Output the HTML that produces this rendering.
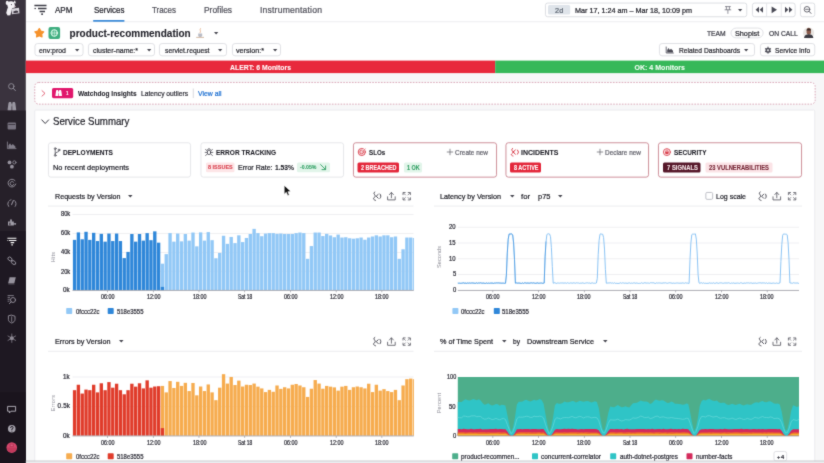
<!DOCTYPE html>
<html>
<head>
<meta charset="utf-8">
<title>product-recommendation | APM</title>
<style>
*{box-sizing:border-box;margin:0;padding:0}
html,body{width:824px;height:463px;overflow:hidden;background:#f7f7f8;font-family:"Liberation Sans",sans-serif}
#root{position:relative;width:824px;height:463px;overflow:hidden;background:#f7f7f8;will-change:transform;filter:url(#soft)}
.a{position:absolute}
.t{position:absolute;white-space:nowrap;display:block;transform-origin:0 50%;-webkit-text-stroke:0.22px currentColor}
.t.b{-webkit-text-stroke:0.08px currentColor}
.r{position:absolute;white-space:nowrap;font-size:5.6px;line-height:7px;color:#8a8a94;transform:translate(-50%,-50%) rotate(-90deg);transform-origin:50% 50%}
.box{position:absolute;background:#fff;border:1px solid #dcdde1;border-radius:2px}
.card{position:absolute;background:#fff;border:1px solid #e4e5e8;border-radius:2.5px;top:142px;height:36px}
.card.red{border-color:#cf7c86}
.bdg{position:absolute;border-radius:1.5px}
svg{position:absolute;overflow:visible}
</style>
</head>
<body>
<svg width="0" height="0" style="position:absolute"><defs><filter id="soft" x="0" y="0" width="100%" height="100%" color-interpolation-filters="sRGB"><feConvolveMatrix order="3" kernelMatrix="0.02 0.085 0.02 0.085 0.58 0.085 0.02 0.085 0.02" divisor="1" edgeMode="duplicate" preserveAlpha="true"/></filter></defs></svg>
<div id="root">
<svg class="a" style="left:0;top:0" width="824" height="463" viewBox="0 0 824 463"><rect x="25.70" y="0.00" width="798.30" height="60.60" rx="0" fill="#ffffff" /><rect x="25.70" y="21.30" width="798.30" height="0.90" rx="0" fill="#ebecee" /><rect x="0.00" y="0.00" width="25.80" height="463.00" rx="0" fill="#3a333e" /><rect x="0.00" y="110.50" width="25.80" height="352.50" rx="0" fill="#262029" /><rect x="0.00" y="231.00" width="25.80" height="232.00" rx="0" fill="#1e1822" /><rect x="0.00" y="392.00" width="25.80" height="71.00" rx="0" fill="#1a141d" /><rect x="93.00" y="20.00" width="31.60" height="1.70" rx="0.8" fill="#3b8ad8" /><rect x="25.80" y="60.60" width="469.40" height="12.50" rx="0" fill="#e8293c" /><rect x="495.20" y="60.60" width="328.80" height="12.50" rx="0" fill="#36b859" /><rect x="34.75" y="82.45" width="780.40" height="21.70" rx="4" fill="#ffffff" stroke="#d79fb1" stroke-width="0.9" stroke-dasharray="1.6 1.3"/><rect x="52.00" y="88.00" width="21.20" height="10.20" rx="1.6" fill="#e1176c" /><rect x="192.80" y="88.50" width="0.80" height="9.50" rx="0" fill="#cfd0d5" /><rect x="34.75" y="110.05" width="780.00" height="359.50" rx="1" fill="#ffffff" stroke="#e9e9ec" stroke-width="0.9" /><rect x="545.45" y="3.05" width="201.30" height="13.70" rx="2.2" fill="#ffffff" stroke="#d9dbe0" stroke-width="0.9" /><rect x="548.00" y="5.00" width="22.20" height="9.60" rx="1.5" fill="#dfe4ea" /><rect x="752.45" y="3.05" width="42.70" height="13.70" rx="2.2" fill="#ffffff" stroke="#d9dbe0" stroke-width="0.9" /><rect x="766.30" y="3.20" width="0.80" height="13.40" rx="0" fill="#dfe0e4" /><rect x="780.80" y="3.20" width="0.80" height="13.40" rx="0" fill="#dfe0e4" /><rect x="800.45" y="3.05" width="14.30" height="13.70" rx="2.2" fill="#ffffff" stroke="#d9dbe0" stroke-width="0.9" /><rect x="34.95" y="43.55" width="48.10" height="12.30" rx="2.6" fill="#ffffff" stroke="#dddee2" stroke-width="0.9" /><rect x="88.45" y="43.55" width="66.10" height="12.30" rx="2.6" fill="#ffffff" stroke="#dddee2" stroke-width="0.9" /><rect x="159.45" y="43.55" width="67.10" height="12.30" rx="2.6" fill="#ffffff" stroke="#dddee2" stroke-width="0.9" /><rect x="232.45" y="43.55" width="48.10" height="12.30" rx="2.6" fill="#ffffff" stroke="#dddee2" stroke-width="0.9" /><rect x="659.45" y="43.55" width="95.10" height="12.30" rx="2.6" fill="#ffffff" stroke="#dddee2" stroke-width="0.9" /><rect x="760.45" y="43.55" width="54.30" height="12.30" rx="2.6" fill="#ffffff" stroke="#dddee2" stroke-width="0.9" /><rect x="730.95" y="28.05" width="32.20" height="9.80" rx="5.3" fill="#ffffff" stroke="#dddee2" stroke-width="0.9" /><rect x="48.45" y="142.75" width="142.10" height="34.40" rx="2.4" fill="#ffffff" stroke="#e3e4e8" stroke-width="0.9" /><rect x="200.95" y="142.75" width="142.60" height="34.40" rx="2.4" fill="#ffffff" stroke="#e3e4e8" stroke-width="0.9" /><rect x="353.45" y="142.75" width="143.10" height="34.40" rx="2.4" fill="#ffffff" stroke="#c98490" stroke-width="0.9" /><rect x="505.95" y="142.75" width="142.60" height="34.40" rx="2.4" fill="#ffffff" stroke="#c98490" stroke-width="0.9" /><rect x="658.45" y="142.75" width="143.10" height="34.40" rx="2.4" fill="#ffffff" stroke="#c98490" stroke-width="0.9" /><rect x="206.00" y="162.60" width="28.50" height="9.60" rx="1.5" fill="#fde5e7" /><rect x="297.00" y="162.60" width="33.00" height="9.60" rx="1.5" fill="#e2f5ea" /><rect x="357.50" y="162.60" width="41.50" height="10.00" rx="1.5" fill="#e3263a" /><rect x="404.00" y="162.60" width="18.00" height="10.00" rx="1.5" fill="#e2f5ea" /><rect x="510.00" y="162.60" width="31.00" height="10.00" rx="1.5" fill="#e3263a" /><rect x="663.00" y="162.40" width="37.50" height="10.00" rx="1.5" fill="#56182a" /><rect x="705.50" y="162.40" width="67.00" height="10.00" rx="1.5" fill="#fbe3e6" /><rect x="48.00" y="205.60" width="365.50" height="0.90" rx="0" fill="#e9eaed" /><rect x="434.00" y="205.60" width="368.00" height="0.90" rx="0" fill="#e9eaed" /><rect x="48.00" y="350.80" width="365.50" height="0.90" rx="0" fill="#e9eaed" /><rect x="434.00" y="350.80" width="368.00" height="0.90" rx="0" fill="#e9eaed" /><rect x="705.85" y="192.45" width="6.80" height="6.90" rx="1.2" fill="#ffffff" stroke="#b9bac2" stroke-width="0.9" /><rect x="773.95" y="451.45" width="12.70" height="9.50" rx="2" fill="#ffffff" stroke="#dcdde1" stroke-width="0.9" /></svg>
<svg class="a" style="left:75.25px;top:49.20px" width="4.3" height="2.4" viewBox="0 0 4.3 2.4"><path d="M0 0H4.3L2.15 2.4Z" fill="#474751"/></svg>
<svg class="a" style="left:146.65px;top:49.20px" width="4.3" height="2.4" viewBox="0 0 4.3 2.4"><path d="M0 0H4.3L2.15 2.4Z" fill="#474751"/></svg>
<svg class="a" style="left:218.15px;top:49.20px" width="4.3" height="2.4" viewBox="0 0 4.3 2.4"><path d="M0 0H4.3L2.15 2.4Z" fill="#474751"/></svg>
<svg class="a" style="left:272.65px;top:49.20px" width="4.3" height="2.4" viewBox="0 0 4.3 2.4"><path d="M0 0H4.3L2.15 2.4Z" fill="#474751"/></svg>
<svg class="a" style="left:743.85px;top:49.20px" width="4.3" height="2.4" viewBox="0 0 4.3 2.4"><path d="M0 0H4.3L2.15 2.4Z" fill="#474751"/></svg>
<svg class="a" style="left:213.85px;top:32.30px" width="4.3" height="2.4" viewBox="0 0 4.3 2.4"><path d="M0 0H4.3L2.15 2.4Z" fill="#474751"/></svg>
<svg class="a" style="left:738.15px;top:9.10px" width="4.3" height="2.4" viewBox="0 0 4.3 2.4"><path d="M0 0H4.3L2.15 2.4Z" fill="#474751"/></svg>
<svg class="a" style="left:128.20px;top:195.00px" width="4.6" height="2.6" viewBox="0 0 4.6 2.6"><path d="M0 0H4.6L2.3 2.6Z" fill="#474751"/></svg>
<svg class="a" style="left:509.50px;top:195.00px" width="4.6" height="2.6" viewBox="0 0 4.6 2.6"><path d="M0 0H4.6L2.3 2.6Z" fill="#474751"/></svg>
<svg class="a" style="left:558.20px;top:195.00px" width="4.6" height="2.6" viewBox="0 0 4.6 2.6"><path d="M0 0H4.6L2.3 2.6Z" fill="#474751"/></svg>
<svg class="a" style="left:119.20px;top:340.30px" width="4.6" height="2.6" viewBox="0 0 4.6 2.6"><path d="M0 0H4.6L2.3 2.6Z" fill="#474751"/></svg>
<svg class="a" style="left:501.50px;top:340.30px" width="4.6" height="2.6" viewBox="0 0 4.6 2.6"><path d="M0 0H4.6L2.3 2.6Z" fill="#474751"/></svg>
<svg class="a" style="left:603.00px;top:340.30px" width="4.6" height="2.6" viewBox="0 0 4.6 2.6"><path d="M0 0H4.6L2.3 2.6Z" fill="#474751"/></svg>
<svg class="a" style="left:0;top:0" width="824" height="463" viewBox="0 0 824 463"><rect x="72.5" y="214.20" width="341.0" height="0.8" fill="#ececef"/><rect x="72.5" y="233.10" width="341.0" height="0.8" fill="#ececef"/><rect x="72.5" y="252.00" width="341.0" height="0.8" fill="#ececef"/><rect x="72.5" y="270.80" width="341.0" height="0.8" fill="#ececef"/><rect x="72.90" y="239.88" width="3.35" height="50.22" fill="#2f87d9"/><rect x="76.72" y="232.39" width="3.35" height="57.71" fill="#2f87d9"/><rect x="80.54" y="239.29" width="3.35" height="50.81" fill="#2f87d9"/><rect x="84.36" y="231.80" width="3.35" height="58.30" fill="#2f87d9"/><rect x="88.18" y="239.88" width="3.35" height="50.22" fill="#2f87d9"/><rect x="92.00" y="232.83" width="3.35" height="57.27" fill="#2f87d9"/><rect x="95.82" y="241.05" width="3.35" height="49.05" fill="#2f87d9"/><rect x="99.64" y="233.86" width="3.35" height="56.24" fill="#2f87d9"/><rect x="103.46" y="241.64" width="3.35" height="48.46" fill="#2f87d9"/><rect x="107.28" y="233.57" width="3.35" height="56.53" fill="#2f87d9"/><rect x="111.10" y="241.05" width="3.35" height="49.05" fill="#2f87d9"/><rect x="114.92" y="233.57" width="3.35" height="56.53" fill="#2f87d9"/><rect x="118.74" y="241.05" width="3.35" height="49.05" fill="#2f87d9"/><rect x="122.56" y="258.09" width="3.35" height="32.01" fill="#2f87d9"/><rect x="126.38" y="251.92" width="3.35" height="38.18" fill="#2f87d9"/><rect x="130.20" y="234.01" width="3.35" height="56.09" fill="#2f87d9"/><rect x="134.02" y="241.64" width="3.35" height="48.46" fill="#2f87d9"/><rect x="137.84" y="234.01" width="3.35" height="56.09" fill="#2f87d9"/><rect x="141.66" y="240.61" width="3.35" height="49.49" fill="#2f87d9"/><rect x="145.48" y="233.12" width="3.35" height="56.98" fill="#2f87d9"/><rect x="149.30" y="240.17" width="3.35" height="49.93" fill="#2f87d9"/><rect x="153.12" y="231.36" width="3.35" height="58.74" fill="#2f87d9"/><rect x="156.94" y="242.67" width="3.35" height="47.43" fill="#2f87d9"/><rect x="160.76" y="263.67" width="3.35" height="26.43" fill="#92c8f6"/><rect x="160.76" y="286.90" width="3.35" height="3.20" fill="#2f87d9"/><rect x="164.58" y="254.12" width="3.35" height="35.98" fill="#92c8f6"/><rect x="168.40" y="233.12" width="3.35" height="56.98" fill="#92c8f6"/><rect x="172.22" y="241.64" width="3.35" height="48.46" fill="#92c8f6"/><rect x="176.04" y="233.57" width="3.35" height="56.53" fill="#92c8f6"/><rect x="179.86" y="241.35" width="3.35" height="48.75" fill="#92c8f6"/><rect x="183.68" y="234.01" width="3.35" height="56.09" fill="#92c8f6"/><rect x="187.50" y="240.61" width="3.35" height="49.49" fill="#92c8f6"/><rect x="191.32" y="232.54" width="3.35" height="57.56" fill="#92c8f6"/><rect x="195.14" y="246.34" width="3.35" height="43.76" fill="#92c8f6"/><rect x="198.96" y="232.39" width="3.35" height="57.71" fill="#92c8f6"/><rect x="202.78" y="240.61" width="3.35" height="49.49" fill="#92c8f6"/><rect x="206.60" y="232.10" width="3.35" height="58.00" fill="#92c8f6"/><rect x="210.42" y="240.17" width="3.35" height="49.93" fill="#92c8f6"/><rect x="214.24" y="258.24" width="3.35" height="31.86" fill="#92c8f6"/><rect x="218.06" y="252.95" width="3.35" height="37.15" fill="#92c8f6"/><rect x="221.88" y="235.77" width="3.35" height="54.33" fill="#92c8f6"/><rect x="225.70" y="243.84" width="3.35" height="46.26" fill="#92c8f6"/><rect x="229.52" y="236.94" width="3.35" height="53.16" fill="#92c8f6"/><rect x="233.34" y="243.11" width="3.35" height="46.99" fill="#92c8f6"/><rect x="237.16" y="235.33" width="3.35" height="54.77" fill="#92c8f6"/><rect x="240.98" y="242.08" width="3.35" height="48.02" fill="#92c8f6"/><rect x="244.80" y="237.97" width="3.35" height="52.13" fill="#92c8f6"/><rect x="248.62" y="234.01" width="3.35" height="56.09" fill="#92c8f6"/><rect x="252.44" y="228.87" width="3.35" height="61.23" fill="#92c8f6"/><rect x="256.26" y="233.12" width="3.35" height="56.98" fill="#92c8f6"/><rect x="260.08" y="236.21" width="3.35" height="53.89" fill="#92c8f6"/><rect x="263.90" y="233.57" width="3.35" height="56.53" fill="#92c8f6"/><rect x="267.72" y="233.12" width="3.35" height="56.98" fill="#92c8f6"/><rect x="271.54" y="233.12" width="3.35" height="56.98" fill="#92c8f6"/><rect x="275.36" y="233.86" width="3.35" height="56.24" fill="#92c8f6"/><rect x="279.18" y="233.57" width="3.35" height="56.53" fill="#92c8f6"/><rect x="283.00" y="234.01" width="3.35" height="56.09" fill="#92c8f6"/><rect x="286.82" y="234.01" width="3.35" height="56.09" fill="#92c8f6"/><rect x="290.64" y="234.01" width="3.35" height="56.09" fill="#92c8f6"/><rect x="294.46" y="233.12" width="3.35" height="56.98" fill="#92c8f6"/><rect x="298.28" y="232.54" width="3.35" height="57.56" fill="#92c8f6"/><rect x="302.10" y="233.12" width="3.35" height="56.98" fill="#92c8f6"/><rect x="305.92" y="258.82" width="3.35" height="31.28" fill="#92c8f6"/><rect x="309.74" y="246.05" width="3.35" height="44.05" fill="#92c8f6"/><rect x="313.56" y="232.54" width="3.35" height="57.56" fill="#92c8f6"/><rect x="317.38" y="232.54" width="3.35" height="57.56" fill="#92c8f6"/><rect x="321.20" y="236.06" width="3.35" height="54.04" fill="#92c8f6"/><rect x="325.02" y="233.86" width="3.35" height="56.24" fill="#92c8f6"/><rect x="328.84" y="235.47" width="3.35" height="54.63" fill="#92c8f6"/><rect x="332.66" y="237.24" width="3.35" height="52.86" fill="#92c8f6"/><rect x="336.48" y="234.59" width="3.35" height="55.51" fill="#92c8f6"/><rect x="340.30" y="237.53" width="3.35" height="52.57" fill="#92c8f6"/><rect x="344.12" y="237.24" width="3.35" height="52.86" fill="#92c8f6"/><rect x="347.94" y="238.26" width="3.35" height="51.84" fill="#92c8f6"/><rect x="351.76" y="238.70" width="3.35" height="51.40" fill="#92c8f6"/><rect x="355.58" y="238.26" width="3.35" height="51.84" fill="#92c8f6"/><rect x="359.40" y="237.53" width="3.35" height="52.57" fill="#92c8f6"/><rect x="363.22" y="239.73" width="3.35" height="50.37" fill="#92c8f6"/><rect x="367.04" y="237.53" width="3.35" height="52.57" fill="#92c8f6"/><rect x="370.86" y="236.50" width="3.35" height="53.60" fill="#92c8f6"/><rect x="374.68" y="235.33" width="3.35" height="54.77" fill="#92c8f6"/><rect x="378.50" y="236.50" width="3.35" height="53.60" fill="#92c8f6"/><rect x="382.32" y="235.33" width="3.35" height="54.77" fill="#92c8f6"/><rect x="386.14" y="235.33" width="3.35" height="54.77" fill="#92c8f6"/><rect x="389.96" y="237.24" width="3.35" height="52.86" fill="#92c8f6"/><rect x="393.78" y="236.50" width="3.35" height="53.60" fill="#92c8f6"/><rect x="397.60" y="258.82" width="3.35" height="31.28" fill="#92c8f6"/><rect x="401.42" y="249.28" width="3.35" height="40.82" fill="#92c8f6"/><rect x="405.24" y="237.53" width="3.35" height="52.57" fill="#92c8f6"/><rect x="409.06" y="237.53" width="3.35" height="52.57" fill="#92c8f6"/><rect x="412.88" y="237.97" width="1.0" height="52.13" fill="#92c8f6"/><rect x="72.5" y="289.95" width="341.3" height="0.8" fill="#9a9aa3"/><rect x="107.20" y="290.30" width="0.7" height="2" fill="#9a9aa3"/><rect x="152.92" y="290.30" width="0.7" height="2" fill="#9a9aa3"/><rect x="198.64" y="290.30" width="0.7" height="2" fill="#9a9aa3"/><rect x="244.36" y="290.30" width="0.7" height="2" fill="#9a9aa3"/><rect x="290.08" y="290.30" width="0.7" height="2" fill="#9a9aa3"/><rect x="335.80" y="290.30" width="0.7" height="2" fill="#9a9aa3"/><rect x="381.52" y="290.30" width="0.7" height="2" fill="#9a9aa3"/><rect x="66.2" y="308.0" width="6" height="6" rx="0.8" fill="#92c8f6"/><rect x="107.7" y="308.0" width="6" height="6" rx="0.8" fill="#2f87d9"/><rect x="72.5" y="376.60" width="341.0" height="0.8" fill="#ececef"/><rect x="72.5" y="406.10" width="341.0" height="0.8" fill="#ececef"/><rect x="72.90" y="390.18" width="3.35" height="45.52" fill="#e03c2b"/><rect x="76.72" y="384.75" width="3.35" height="50.95" fill="#e03c2b"/><rect x="80.54" y="393.56" width="3.35" height="42.14" fill="#e03c2b"/><rect x="84.36" y="389.59" width="3.35" height="46.11" fill="#e03c2b"/><rect x="88.18" y="390.18" width="3.35" height="45.52" fill="#e03c2b"/><rect x="92.00" y="384.75" width="3.35" height="50.95" fill="#e03c2b"/><rect x="95.82" y="392.38" width="3.35" height="43.32" fill="#e03c2b"/><rect x="99.64" y="383.28" width="3.35" height="52.42" fill="#e03c2b"/><rect x="103.46" y="390.18" width="3.35" height="45.52" fill="#e03c2b"/><rect x="107.28" y="382.10" width="3.35" height="53.60" fill="#e03c2b"/><rect x="111.10" y="387.68" width="3.35" height="48.02" fill="#e03c2b"/><rect x="114.92" y="383.72" width="3.35" height="51.98" fill="#e03c2b"/><rect x="118.74" y="390.18" width="3.35" height="45.52" fill="#e03c2b"/><rect x="122.56" y="394.29" width="3.35" height="41.41" fill="#e03c2b"/><rect x="126.38" y="390.18" width="3.35" height="45.52" fill="#e03c2b"/><rect x="130.20" y="383.72" width="3.35" height="51.98" fill="#e03c2b"/><rect x="134.02" y="386.65" width="3.35" height="49.05" fill="#e03c2b"/><rect x="137.84" y="383.28" width="3.35" height="52.42" fill="#e03c2b"/><rect x="141.66" y="388.42" width="3.35" height="47.28" fill="#e03c2b"/><rect x="145.48" y="380.34" width="3.35" height="55.36" fill="#e03c2b"/><rect x="149.30" y="387.68" width="3.35" height="48.02" fill="#e03c2b"/><rect x="153.12" y="386.51" width="3.35" height="49.19" fill="#e03c2b"/><rect x="156.94" y="386.21" width="3.35" height="49.49" fill="#e03c2b"/><rect x="160.76" y="385.92" width="3.35" height="49.78" fill="#f6ac4f"/><rect x="160.76" y="428.10" width="3.35" height="7.60" fill="#e03c2b"/><rect x="164.58" y="392.38" width="3.35" height="43.32" fill="#f6ac4f"/><rect x="168.40" y="381.07" width="3.35" height="54.63" fill="#f6ac4f"/><rect x="172.22" y="387.98" width="3.35" height="47.72" fill="#f6ac4f"/><rect x="176.04" y="381.81" width="3.35" height="53.89" fill="#f6ac4f"/><rect x="179.86" y="385.92" width="3.35" height="49.78" fill="#f6ac4f"/><rect x="183.68" y="382.84" width="3.35" height="52.86" fill="#f6ac4f"/><rect x="187.50" y="391.06" width="3.35" height="44.64" fill="#f6ac4f"/><rect x="191.32" y="382.98" width="3.35" height="52.72" fill="#f6ac4f"/><rect x="195.14" y="395.32" width="3.35" height="40.38" fill="#f6ac4f"/><rect x="198.96" y="386.51" width="3.35" height="49.19" fill="#f6ac4f"/><rect x="202.78" y="391.06" width="3.35" height="44.64" fill="#f6ac4f"/><rect x="206.60" y="384.45" width="3.35" height="51.25" fill="#f6ac4f"/><rect x="210.42" y="392.38" width="3.35" height="43.32" fill="#f6ac4f"/><rect x="214.24" y="400.16" width="3.35" height="35.54" fill="#f6ac4f"/><rect x="218.06" y="387.68" width="3.35" height="48.02" fill="#f6ac4f"/><rect x="221.88" y="374.17" width="3.35" height="61.53" fill="#f6ac4f"/><rect x="225.70" y="383.57" width="3.35" height="52.13" fill="#f6ac4f"/><rect x="229.52" y="376.96" width="3.35" height="58.74" fill="#f6ac4f"/><rect x="233.34" y="385.04" width="3.35" height="50.66" fill="#f6ac4f"/><rect x="237.16" y="380.63" width="3.35" height="55.07" fill="#f6ac4f"/><rect x="240.98" y="386.51" width="3.35" height="49.19" fill="#f6ac4f"/><rect x="244.80" y="384.75" width="3.35" height="50.95" fill="#f6ac4f"/><rect x="248.62" y="385.04" width="3.35" height="50.66" fill="#f6ac4f"/><rect x="252.44" y="383.57" width="3.35" height="52.13" fill="#f6ac4f"/><rect x="256.26" y="386.65" width="3.35" height="49.05" fill="#f6ac4f"/><rect x="260.08" y="388.42" width="3.35" height="47.28" fill="#f6ac4f"/><rect x="263.90" y="392.09" width="3.35" height="43.61" fill="#f6ac4f"/><rect x="267.72" y="389.89" width="3.35" height="45.81" fill="#f6ac4f"/><rect x="271.54" y="391.79" width="3.35" height="43.91" fill="#f6ac4f"/><rect x="275.36" y="385.48" width="3.35" height="50.22" fill="#f6ac4f"/><rect x="279.18" y="388.86" width="3.35" height="46.84" fill="#f6ac4f"/><rect x="283.00" y="387.24" width="3.35" height="48.46" fill="#f6ac4f"/><rect x="286.82" y="388.42" width="3.35" height="47.28" fill="#f6ac4f"/><rect x="290.64" y="384.75" width="3.35" height="50.95" fill="#f6ac4f"/><rect x="294.46" y="384.01" width="3.35" height="51.69" fill="#f6ac4f"/><rect x="298.28" y="385.48" width="3.35" height="50.22" fill="#f6ac4f"/><rect x="302.10" y="387.24" width="3.35" height="48.46" fill="#f6ac4f"/><rect x="305.92" y="396.93" width="3.35" height="38.77" fill="#f6ac4f"/><rect x="309.74" y="388.71" width="3.35" height="46.99" fill="#f6ac4f"/><rect x="313.56" y="380.05" width="3.35" height="55.65" fill="#f6ac4f"/><rect x="317.38" y="383.57" width="3.35" height="52.13" fill="#f6ac4f"/><rect x="321.20" y="388.71" width="3.35" height="46.99" fill="#f6ac4f"/><rect x="325.02" y="385.92" width="3.35" height="49.78" fill="#f6ac4f"/><rect x="328.84" y="386.65" width="3.35" height="49.05" fill="#f6ac4f"/><rect x="332.66" y="387.39" width="3.35" height="48.31" fill="#f6ac4f"/><rect x="336.48" y="390.62" width="3.35" height="45.08" fill="#f6ac4f"/><rect x="340.30" y="386.65" width="3.35" height="49.05" fill="#f6ac4f"/><rect x="344.12" y="385.92" width="3.35" height="49.78" fill="#f6ac4f"/><rect x="347.94" y="389.89" width="3.35" height="45.81" fill="#f6ac4f"/><rect x="351.76" y="387.24" width="3.35" height="48.46" fill="#f6ac4f"/><rect x="355.58" y="386.51" width="3.35" height="49.19" fill="#f6ac4f"/><rect x="359.40" y="387.24" width="3.35" height="48.46" fill="#f6ac4f"/><rect x="363.22" y="388.42" width="3.35" height="47.28" fill="#f6ac4f"/><rect x="367.04" y="383.72" width="3.35" height="51.98" fill="#f6ac4f"/><rect x="370.86" y="392.09" width="3.35" height="43.61" fill="#f6ac4f"/><rect x="374.68" y="384.75" width="3.35" height="50.95" fill="#f6ac4f"/><rect x="378.50" y="390.62" width="3.35" height="45.08" fill="#f6ac4f"/><rect x="382.32" y="389.15" width="3.35" height="46.55" fill="#f6ac4f"/><rect x="386.14" y="391.06" width="3.35" height="44.64" fill="#f6ac4f"/><rect x="389.96" y="392.09" width="3.35" height="43.61" fill="#f6ac4f"/><rect x="393.78" y="389.89" width="3.35" height="45.81" fill="#f6ac4f"/><rect x="397.60" y="400.16" width="3.35" height="35.54" fill="#f6ac4f"/><rect x="401.42" y="385.48" width="3.35" height="50.22" fill="#f6ac4f"/><rect x="405.24" y="379.17" width="3.35" height="56.53" fill="#f6ac4f"/><rect x="409.06" y="378.58" width="3.35" height="57.12" fill="#f6ac4f"/><rect x="412.88" y="379.17" width="1.0" height="56.53" fill="#f6ac4f"/><rect x="72.5" y="435.55" width="341.3" height="0.8" fill="#9a9aa3"/><rect x="107.20" y="435.90" width="0.7" height="2" fill="#9a9aa3"/><rect x="152.92" y="435.90" width="0.7" height="2" fill="#9a9aa3"/><rect x="198.64" y="435.90" width="0.7" height="2" fill="#9a9aa3"/><rect x="244.36" y="435.90" width="0.7" height="2" fill="#9a9aa3"/><rect x="290.08" y="435.90" width="0.7" height="2" fill="#9a9aa3"/><rect x="335.80" y="435.90" width="0.7" height="2" fill="#9a9aa3"/><rect x="381.52" y="435.90" width="0.7" height="2" fill="#9a9aa3"/><rect x="66.2" y="453.2" width="6" height="6" rx="0.8" fill="#f6ac4f"/><rect x="107.7" y="453.2" width="6" height="6" rx="0.8" fill="#e03c2b"/><rect x="457.8" y="226.80" width="341.2" height="0.8" fill="#ececef"/><rect x="457.8" y="242.60" width="341.2" height="0.8" fill="#ececef"/><rect x="457.8" y="258.40" width="341.2" height="0.8" fill="#ececef"/><rect x="457.8" y="274.20" width="341.2" height="0.8" fill="#ececef"/><path d="M457.80 282.92 L458.70 283.13 L459.60 283.01 L460.50 283.17 L461.40 283.19 L462.30 282.80 L463.20 282.76 L464.10 283.34 L465.00 282.93 L465.90 282.91 L466.80 283.45 L467.70 283.08 L468.60 283.34 L469.50 283.08 L470.40 283.20 L471.30 282.86 L472.20 283.19 L473.10 283.36 L474.00 283.12 L474.90 283.27 L475.80 283.22 L476.70 282.79 L477.60 283.28 L478.50 283.16 L479.40 282.96 L480.30 282.77 L481.20 283.36 L482.10 283.08 L483.00 283.25 L483.90 283.37 L484.80 283.25 L485.70 283.39 L486.60 283.03 L487.50 283.31 L488.40 283.06 L489.30 283.40 L490.20 283.37 L491.10 282.82 L492.00 282.85 L492.90 282.90 L493.80 283.43 L494.70 283.06 L495.60 283.19 L496.50 282.96 L497.40 283.11 L498.30 283.02 L499.20 283.00 L500.10 283.16 L501.00 283.16 L501.90 283.38 L502.80 283.23 L503.70 283.40 L504.60 283.35 L505.50 283.44 L506.40 274.87 L507.30 253.13 L508.20 239.37 L509.10 233.91 L510.00 234.04 L510.90 233.78 L511.80 234.24 L512.70 235.01 L513.60 242.79 L514.50 259.33 L515.40 283.36 L516.30 282.78 L517.20 283.18 L518.10 282.78 L519.00 283.25 L519.90 282.98 L520.80 283.37 L521.70 283.44 L522.60 283.10 L523.50 283.45 L524.40 282.97 L525.30 282.80 L526.20 283.17 L527.10 282.77 L528.00 282.89 L528.90 283.04 L529.80 283.18 L530.70 282.86 L531.60 282.78 L532.50 283.36 L533.40 282.97 L534.30 283.42 L535.20 283.38 L536.10 283.01 L537.00 283.07 L537.90 283.11 L538.80 283.20 L539.70 283.17 L540.60 283.14 L541.50 283.18 L542.40 283.41 L543.30 283.10 L544.20 283.05 L545.10 256.86 L546.00 241.90 L546.90 234.51 L547.80 233.96 L548.70 233.76 L549.60 234.07 L550.50 236.69 L551.40 247.59 L552.30 266.55 L553.20 283.27 L554.10 282.77 L555.00 282.79 L555.90 283.22 L556.80 283.42 L557.70 282.93 L558.60 283.07 L559.50 283.16 L560.40 282.97 L561.30 283.00 L562.20 282.97 L563.10 283.01 L564.00 283.17 L564.90 282.96 L565.80 283.01 L566.70 283.29 L567.60 282.77 L568.50 283.15 L569.40 283.26 L570.30 282.97 L571.20 282.91 L572.10 283.31 L573.00 282.92 L573.90 282.88 L574.80 283.05 L575.70 283.24 L576.60 282.82 L577.50 282.98 L578.40 282.98 L579.30 283.33 L580.20 283.06 L581.10 283.35 L582.00 282.87 L582.90 282.99 L583.80 283.21 L584.70 283.37 L585.60 283.07 L586.50 282.91 L587.40 282.83 L588.30 283.12 L589.20 282.88 L590.10 283.31 L591.00 283.34 L591.90 282.88 L592.80 282.95 L593.70 283.32 L594.60 283.20 L595.50 283.31 L596.40 282.99 L597.30 278.36 L598.20 254.79 L599.10 240.40 L600.00 234.17 L600.90 233.83 L601.80 234.22 L602.70 234.24 L603.60 237.65 L604.50 249.06 L605.40 269.29 L606.30 283.21 L607.20 283.11 L608.10 282.95 L609.00 282.99 L609.90 282.91 L610.80 282.80 L611.70 283.16 L612.60 282.95 L613.50 283.32 L614.40 282.78 L615.30 283.38 L616.20 283.24 L617.10 283.40 L618.00 283.38 L618.90 283.38 L619.80 283.15 L620.70 282.76 L621.60 283.27 L622.50 282.87 L623.40 282.96 L624.30 283.21 L625.20 283.12 L626.10 283.04 L627.00 283.41 L627.90 283.18 L628.80 282.99 L629.70 282.93 L630.60 283.35 L631.50 283.08 L632.40 283.30 L633.30 283.00 L634.20 282.89 L635.10 283.12 L636.00 283.32 L636.90 282.87 L637.80 283.30 L638.70 283.40 L639.60 283.31 L640.50 283.33 L641.40 282.76 L642.30 283.19 L643.20 283.35 L644.10 282.78 L645.00 282.94 L645.90 282.94 L646.80 283.12 L647.70 283.05 L648.60 283.08 L649.50 283.29 L650.40 282.75 L651.30 282.79 L652.20 282.84 L653.10 282.84 L654.00 282.80 L654.90 283.43 L655.80 283.35 L656.70 282.81 L657.60 283.10 L658.50 282.97 L659.40 282.97 L660.30 283.00 L661.20 283.20 L662.10 283.16 L663.00 283.00 L663.90 282.88 L664.80 282.98 L665.70 282.84 L666.60 283.14 L667.50 283.25 L668.40 283.02 L669.30 282.81 L670.20 282.87 L671.10 283.01 L672.00 283.17 L672.90 283.30 L673.80 283.02 L674.70 283.31 L675.60 283.19 L676.50 283.05 L677.40 283.01 L678.30 283.10 L679.20 283.24 L680.10 283.04 L681.00 283.24 L681.90 283.07 L682.80 282.92 L683.70 283.13 L684.60 283.24 L685.50 282.80 L686.40 283.05 L687.30 283.05 L688.20 283.37 L689.10 283.41 L690.00 259.39 L690.90 242.85 L691.80 234.67 L692.70 234.08 L693.60 234.15 L694.50 234.12 L695.40 233.86 L696.30 239.09 L697.20 253.04 L698.10 274.83 L699.00 282.82 L699.90 283.37 L700.80 282.88 L701.70 282.77 L702.60 283.34 L703.50 282.83 L704.40 283.34 L705.30 283.22 L706.20 283.34 L707.10 283.42 L708.00 283.16 L708.90 283.31 L709.80 282.78 L710.70 283.29 L711.60 283.11 L712.50 283.25 L713.40 282.82 L714.30 283.27 L715.20 283.40 L716.10 282.79 L717.00 282.98 L717.90 283.14 L718.80 283.33 L719.70 282.92 L720.60 282.88 L721.50 282.92 L722.40 283.18 L723.30 283.28 L724.20 283.03 L725.10 283.01 L726.00 283.03 L726.90 283.00 L727.80 283.04 L728.70 282.81 L729.60 283.10 L730.50 283.43 L731.40 283.04 L732.30 283.27 L733.20 282.86 L734.10 283.23 L735.00 283.28 L735.90 283.22 L736.80 283.11 L737.70 283.09 L738.60 283.20 L739.50 283.38 L740.40 282.85 L741.30 282.82 L742.20 283.27 L743.10 283.39 L744.00 283.11 L744.90 283.06 L745.80 283.25 L746.70 282.88 L747.60 282.94 L748.50 282.89 L749.40 283.16 L750.30 282.97 L751.20 282.91 L752.10 283.23 L753.00 283.42 L753.90 282.96 L754.80 283.24 L755.70 283.04 L756.60 283.35 L757.50 283.16 L758.40 282.94 L759.30 282.90 L760.20 282.77 L761.10 283.09 L762.00 283.02 L762.90 282.87 L763.80 283.00 L764.70 282.98 L765.60 283.29 L766.50 282.85 L767.40 283.44 L768.30 283.09 L769.20 283.17 L770.10 283.08 L771.00 283.33 L771.90 283.33 L772.80 283.14 L773.70 283.09 L774.60 283.25 L775.50 283.35 L776.40 283.03 L777.30 283.26 L778.20 283.42 L779.10 283.08 L780.00 282.91 L780.90 261.60 L781.80 244.61 L782.70 235.21 L783.60 233.88 L784.50 234.10 L785.40 234.20 L786.30 234.18 L787.20 234.82 L788.10 242.76 L789.00 259.36 L789.90 282.95 L790.80 283.00 L791.70 283.16 L792.60 283.22 L793.50 282.75 L794.40 282.98 L795.30 283.06 L796.20 283.09 L797.10 282.90 L798.00 283.16 L798.90 283.42" fill="none" stroke="#86c1f3" stroke-width="0.95" stroke-linejoin="round"/><path d="M457.80 283.19 L458.70 283.27 L459.60 283.31 L460.50 283.41 L461.40 283.27 L462.30 283.40 L463.20 282.77 L464.10 283.08 L465.00 283.41 L465.90 283.20 L466.80 283.38 L467.70 282.83 L468.60 283.08 L469.50 282.92 L470.40 283.13 L471.30 283.15 L472.20 282.76 L473.10 282.90 L474.00 282.95 L474.90 283.39 L475.80 283.29 L476.70 282.86 L477.60 283.31 L478.50 282.85 L479.40 283.18 L480.30 282.84 L481.20 282.75 L482.10 283.36 L483.00 282.90 L483.90 282.90 L484.80 283.44 L485.70 283.36 L486.60 282.95 L487.50 283.42 L488.40 283.13 L489.30 283.22 L490.20 282.89 L491.10 283.41 L492.00 283.23 L492.90 283.43 L493.80 283.38 L494.70 282.96 L495.60 283.00 L496.50 282.87 L497.40 282.85 L498.30 282.80 L499.20 282.96 L500.10 283.17 L501.00 282.75 L501.90 283.22 L502.80 282.99 L503.70 282.97 L504.60 283.32 L505.50 283.09 L506.40 275.03 L507.30 252.68 L508.20 239.10 L509.10 234.23 L510.00 234.14 L510.90 234.04 L511.80 233.77 L512.70 235.09 L513.60 243.10 L514.50 259.41 L515.40 282.99 L516.30 283.00 L517.20 283.12 L518.10 283.29 L519.00 282.83 L519.90 283.27 L520.80 283.31 L521.70 283.35 L522.60 282.78 L523.50 283.41 L524.40 282.81 L525.30 282.99 L526.20 283.18 L527.10 283.39 L528.00 282.99 L528.90 283.40 L529.80 283.13 L530.70 282.97 L531.60 282.97 L532.50 282.87 L533.40 282.80 L534.30 282.85 L535.20 283.23 L536.10 283.45 L537.00 282.86 L537.90 282.78 L538.80 283.44 L539.70 283.12 L540.60 283.03 L541.50 282.92 L542.40 283.17 L543.30 283.33 L544.20 283.07 L545.10 256.77 L546.00 241.42" fill="none" stroke="#3a8fdb" stroke-width="0.8" stroke-linejoin="round" opacity="0.75"/><rect x="457.8" y="289.95" width="341.2" height="0.8" fill="#9a9aa3"/><rect x="492.50" y="290.30" width="0.7" height="2" fill="#9a9aa3"/><rect x="538.22" y="290.30" width="0.7" height="2" fill="#9a9aa3"/><rect x="583.94" y="290.30" width="0.7" height="2" fill="#9a9aa3"/><rect x="629.66" y="290.30" width="0.7" height="2" fill="#9a9aa3"/><rect x="675.38" y="290.30" width="0.7" height="2" fill="#9a9aa3"/><rect x="721.10" y="290.30" width="0.7" height="2" fill="#9a9aa3"/><rect x="766.82" y="290.30" width="0.7" height="2" fill="#9a9aa3"/><rect x="452.4" y="308.0" width="6" height="6" rx="0.8" fill="#92c8f6"/><rect x="493.8" y="308.0" width="6" height="6" rx="0.8" fill="#2f87d9"/><rect x="457.8" y="377.0" width="341.2" height="58.69999999999999" fill="#4dae8b"/><path d="M457.80 435.70 L457.80 402.10 L459.70 401.93 L461.61 401.99 L463.51 400.45 L465.42 399.37 L467.32 400.07 L469.23 400.53 L471.13 400.03 L473.04 399.02 L474.94 399.50 L476.85 400.20 L478.75 399.32 L480.66 400.50 L482.56 402.88 L484.47 404.65 L486.37 404.13 L488.28 403.33 L490.18 404.66 L492.09 405.44 L493.99 404.89 L495.90 403.92 L497.80 404.33 L499.71 405.66 L501.61 404.80 L503.52 404.96 L505.42 405.45 L507.33 414.81 L509.23 424.28 L511.14 431.95 L513.04 427.45 L514.95 417.53 L516.85 404.54 L518.76 401.78 L520.66 401.75 L522.57 401.48 L524.47 400.25 L526.38 399.80 L528.28 400.70 L530.19 401.41 L532.09 400.87 L534.00 399.65 L535.90 400.41 L537.81 399.93 L539.71 398.97 L541.62 400.02 L543.52 403.42 L545.43 414.04 L547.33 424.36 L549.24 432.21 L551.14 426.98 L553.05 417.41 L554.95 405.15 L556.86 402.95 L558.76 403.71 L560.67 403.69 L562.57 402.88 L564.48 401.53 L566.38 402.29 L568.29 402.32 L570.19 401.86 L572.10 401.05 L574.00 401.37 L575.91 402.47 L577.81 401.82 L579.72 400.80 L581.62 401.25 L583.53 401.70 L585.43 401.30 L587.34 400.96 L589.24 401.47 L591.15 402.47 L593.05 401.96 L594.96 401.21 L596.86 401.93 L598.77 407.92 L600.67 419.74 L602.58 429.23 L604.48 430.64 L606.39 422.86 L608.29 412.89 L610.20 406.52 L612.10 407.12 L614.01 407.25 L615.91 406.28 L617.82 404.97 L619.72 406.30 L621.63 407.21 L623.53 407.05 L625.44 406.19 L627.34 407.01 L629.25 407.44 L631.15 405.31 L633.06 403.19 L634.96 403.06 L636.87 402.70 L638.77 401.73 L640.68 400.47 L642.58 401.13 L644.49 401.53 L646.39 401.41 L648.30 402.35 L650.20 404.08 L652.11 403.07 L654.01 400.83 L655.92 399.56 L657.82 400.32 L659.73 400.85 L661.63 400.36 L663.54 400.38 L665.44 401.72 L667.35 403.06 L669.25 402.67 L671.16 401.51 L673.06 402.27 L674.97 403.84 L676.87 403.64 L678.78 403.96 L680.68 404.37 L682.59 404.83 L684.49 404.45 L686.40 403.49 L688.30 403.95 L690.21 412.67 L692.11 423.30 L694.02 431.57 L695.92 427.89 L697.83 418.43 L699.73 406.09 L701.64 400.98 L703.54 399.74 L705.45 400.47 L707.35 399.58 L709.26 398.87 L711.16 399.95 L713.07 400.83 L714.97 401.02 L716.88 400.54 L718.78 402.19 L720.69 402.99 L722.59 402.84 L724.50 402.69 L726.40 404.26 L728.31 404.90 L730.21 404.42 L732.12 403.81 L734.02 404.47 L735.93 404.94 L737.83 404.37 L739.74 403.81 L741.64 404.84 L743.55 405.44 L745.45 404.72 L747.36 404.13 L749.26 404.80 L751.17 404.64 L753.07 403.41 L754.98 402.53 L756.88 402.34 L758.79 402.63 L760.69 401.38 L762.60 400.98 L764.50 401.90 L766.41 402.20 L768.31 401.46 L770.22 401.26 L772.12 402.37 L774.03 403.41 L775.93 403.79 L777.84 403.58 L779.74 404.56 L781.65 411.50 L783.55 421.94 L785.46 430.43 L787.36 429.67 L789.27 421.38 L791.17 410.74 L793.08 405.32 L794.98 406.09 L796.89 407.11 L798.79 406.40 L799.00 405.14 L799.00 435.70Z" fill="#2fc4c6"/><path d="M457.80 417.31 L459.70 417.76 L461.61 417.69 L463.51 416.10 L465.42 416.18 L467.32 416.75 L469.23 416.78 L471.13 415.95 L473.04 415.87 L474.94 415.83 L476.85 416.76 L478.75 416.36 L480.66 416.50 L482.56 418.21 L484.47 419.18 L486.37 419.02 L488.28 417.97 L490.18 418.61 L492.09 419.63 L493.99 419.24 L495.90 418.35 L497.80 419.16 L499.71 419.82 L501.61 418.87 L503.52 418.37 L505.42 419.41 L507.33 424.62 L509.23 429.48 L511.14 433.79 L513.04 431.34 L514.95 426.04 L516.85 418.87 L518.76 417.01 L520.66 417.19 L522.57 417.17 L524.47 416.77 L526.38 416.29 L528.28 416.45 L530.19 417.39 L532.09 417.37 L534.00 416.14 L535.90 416.62 L537.81 416.59 L539.71 416.18 L541.62 416.50 L543.52 417.99 L545.43 424.28 L547.33 429.62 L549.24 433.93 L551.14 431.01 L553.05 426.04 L554.95 419.39 L556.86 417.76 L558.76 418.33 L560.67 418.94 L562.57 417.89 L564.48 417.57 L566.38 417.54 L568.29 417.75 L570.19 417.13 L572.10 416.38 L574.00 417.42 L575.91 417.83 L577.81 416.97 L579.72 416.38 L581.62 416.90 L583.53 418.03 L585.43 417.10 L587.34 416.79 L589.24 416.96 L591.15 417.94 L593.05 417.57 L594.96 417.33 L596.86 417.82 L598.77 420.69 L600.67 427.01 L602.58 432.30 L604.48 433.10 L606.39 428.97 L608.29 423.37 L610.20 419.80 L612.10 419.97 L614.01 420.10 L615.91 419.89 L617.82 419.12 L619.72 420.29 L621.63 420.99 L623.53 420.55 L625.44 419.60 L627.34 419.82 L629.25 420.08 L631.15 419.27 L633.06 417.76 L634.96 418.29 L636.87 417.96 L638.77 417.24 L640.68 416.07 L642.58 416.67 L644.49 417.60 L646.39 417.57 L648.30 417.05 L650.20 418.62 L652.11 418.12 L654.01 417.16 L655.92 416.29 L657.82 416.21 L659.73 417.52 L661.63 417.06 L663.54 416.86 L665.44 417.50 L667.35 417.99 L669.25 417.97 L671.16 417.52 L673.06 417.86 L674.97 418.32 L676.87 418.42 L678.78 418.64 L680.68 418.88 L682.59 419.29 L684.49 419.04 L686.40 418.27 L688.30 418.40 L690.21 423.32 L692.11 429.04 L694.02 433.56 L695.92 431.62 L697.83 426.60 L699.73 419.68 L701.64 416.43 L703.54 416.50 L705.45 417.04 L707.35 415.89 L709.26 415.64 L711.16 416.38 L713.07 417.07 L714.97 416.70 L716.88 416.38 L718.78 417.64 L720.69 418.30 L722.59 417.74 L724.50 417.66 L726.40 418.52 L728.31 419.01 L730.21 418.78 L732.12 418.10 L734.02 418.91 L735.93 419.50 L737.83 418.63 L739.74 418.14 L741.64 418.70 L743.55 419.49 L745.45 419.22 L747.36 418.35 L749.26 419.12 L751.17 419.37 L753.07 418.52 L754.98 417.20 L756.88 417.87 L758.79 418.23 L760.69 417.23 L762.60 416.48 L764.50 417.46 L766.41 417.44 L768.31 417.72 L770.22 416.96 L772.12 417.32 L774.03 418.62 L775.93 418.32 L777.84 418.26 L779.74 419.08 L781.65 422.49 L783.55 428.25 L785.46 432.89 L787.36 432.55 L789.27 428.03 L791.17 421.88 L793.08 419.58 L794.98 420.05 L796.89 420.51 L798.79 419.37 L799.00 418.86" fill="none" stroke="#62d6d7" stroke-width="0.8"/><path d="M457.80 435.70 L457.80 428.88 L459.70 429.12 L461.61 429.37 L463.51 428.85 L465.42 429.11 L467.32 429.15 L469.23 429.13 L471.13 428.83 L473.04 429.25 L474.94 429.19 L476.85 428.88 L478.75 429.05 L480.66 428.85 L482.56 429.38 L484.47 429.31 L486.37 429.17 L488.28 429.24 L490.18 429.04 L492.09 428.97 L493.99 429.08 L495.90 428.86 L497.80 429.33 L499.71 428.99 L501.61 429.06 L503.52 429.28 L505.42 429.25 L507.33 431.62 L509.23 434.61 L511.14 435.70 L513.04 435.53 L514.95 432.90 L516.85 429.32 L518.76 429.23 L520.66 428.89 L522.57 429.21 L524.47 428.96 L526.38 429.08 L528.28 428.90 L530.19 429.16 L532.09 429.07 L534.00 429.06 L535.90 429.02 L537.81 429.16 L539.71 429.17 L541.62 429.08 L543.52 428.92 L545.43 431.82 L547.33 434.72 L549.24 435.70 L551.14 435.41 L553.05 432.67 L554.95 429.65 L556.86 428.95 L558.76 429.31 L560.67 429.26 L562.57 428.98 L564.48 428.87 L566.38 428.88 L568.29 428.86 L570.19 428.94 L572.10 428.84 L574.00 428.88 L575.91 429.10 L577.81 429.38 L579.72 429.34 L581.62 429.01 L583.53 429.29 L585.43 429.11 L587.34 428.92 L589.24 429.11 L591.15 429.06 L593.05 428.95 L594.96 429.10 L596.86 429.14 L598.77 430.34 L600.67 433.55 L602.58 435.70 L604.48 435.70 L606.39 433.97 L608.29 431.06 L610.20 428.92 L612.10 428.94 L614.01 429.29 L615.91 428.99 L617.82 428.96 L619.72 429.30 L621.63 429.12 L623.53 429.38 L625.44 429.09 L627.34 428.84 L629.25 429.15 L631.15 429.17 L633.06 429.31 L634.96 429.32 L636.87 429.01 L638.77 429.12 L640.68 428.98 L642.58 428.90 L644.49 428.99 L646.39 429.21 L648.30 429.03 L650.20 429.19 L652.11 428.84 L654.01 429.18 L655.92 429.27 L657.82 429.09 L659.73 429.07 L661.63 429.14 L663.54 428.86 L665.44 429.25 L667.35 429.25 L669.25 428.98 L671.16 428.84 L673.06 429.14 L674.97 428.99 L676.87 429.35 L678.78 429.11 L680.68 429.27 L682.59 428.83 L684.49 428.90 L686.40 429.02 L688.30 429.31 L690.21 431.61 L692.11 434.46 L694.02 435.70 L695.92 435.68 L697.83 432.93 L699.73 429.92 L701.64 429.23 L703.54 429.20 L705.45 429.09 L707.35 429.37 L709.26 428.99 L711.16 428.99 L713.07 428.88 L714.97 429.24 L716.88 429.27 L718.78 429.19 L720.69 428.93 L722.59 429.25 L724.50 428.85 L726.40 428.96 L728.31 429.37 L730.21 429.28 L732.12 429.19 L734.02 429.10 L735.93 428.93 L737.83 428.90 L739.74 428.95 L741.64 428.84 L743.55 429.25 L745.45 429.04 L747.36 429.08 L749.26 429.29 L751.17 429.31 L753.07 429.10 L754.98 428.88 L756.88 429.29 L758.79 429.11 L760.69 429.28 L762.60 429.00 L764.50 429.27 L766.41 429.26 L768.31 428.94 L770.22 429.00 L772.12 429.07 L774.03 428.88 L775.93 429.11 L777.84 429.37 L779.74 429.02 L781.65 430.68 L783.55 433.93 L785.46 435.70 L787.36 435.70 L789.27 433.60 L791.17 430.40 L793.08 429.34 L794.98 429.18 L796.89 429.33 L798.79 429.17 L799.00 429.19 L799.00 435.70Z" fill="#d42a5b"/><path d="M457.80 435.70 L457.80 432.42 L459.70 432.37 L461.61 432.30 L463.51 432.36 L465.42 432.57 L467.32 432.43 L469.23 432.36 L471.13 432.29 L473.04 432.56 L474.94 432.25 L476.85 432.42 L478.75 432.31 L480.66 432.32 L482.56 432.31 L484.47 432.33 L486.37 432.51 L488.28 432.28 L490.18 432.55 L492.09 432.47 L493.99 432.50 L495.90 432.42 L497.80 432.27 L499.71 432.26 L501.61 432.44 L503.52 432.34 L505.42 432.53 L507.33 433.59 L509.23 435.17 L511.14 435.70 L513.04 435.61 L514.95 434.33 L516.85 432.79 L518.76 432.24 L520.66 432.33 L522.57 432.35 L524.47 432.28 L526.38 432.37 L528.28 432.33 L530.19 432.29 L532.09 432.42 L534.00 432.26 L535.90 432.52 L537.81 432.27 L539.71 432.31 L541.62 432.48 L543.52 432.34 L545.43 433.80 L547.33 435.22 L549.24 435.70 L551.14 435.56 L553.05 434.25 L554.95 432.50 L556.86 432.25 L558.76 432.59 L560.67 432.47 L562.57 432.45 L564.48 432.33 L566.38 432.46 L568.29 432.43 L570.19 432.36 L572.10 432.24 L574.00 432.29 L575.91 432.32 L577.81 432.31 L579.72 432.54 L581.62 432.26 L583.53 432.40 L585.43 432.29 L587.34 432.27 L589.24 432.39 L591.15 432.58 L593.05 432.39 L594.96 432.44 L596.86 432.54 L598.77 433.07 L600.67 434.55 L602.58 435.70 L604.48 435.70 L606.39 434.84 L608.29 433.38 L610.20 432.37 L612.10 432.27 L614.01 432.24 L615.91 432.50 L617.82 432.54 L619.72 432.35 L621.63 432.32 L623.53 432.55 L625.44 432.54 L627.34 432.26 L629.25 432.32 L631.15 432.38 L633.06 432.43 L634.96 432.41 L636.87 432.29 L638.77 432.24 L640.68 432.31 L642.58 432.34 L644.49 432.56 L646.39 432.36 L648.30 432.47 L650.20 432.24 L652.11 432.58 L654.01 432.57 L655.92 432.27 L657.82 432.24 L659.73 432.32 L661.63 432.53 L663.54 432.44 L665.44 432.36 L667.35 432.58 L669.25 432.45 L671.16 432.26 L673.06 432.25 L674.97 432.42 L676.87 432.37 L678.78 432.55 L680.68 432.38 L682.59 432.25 L684.49 432.31 L686.40 432.39 L688.30 432.50 L690.21 433.67 L692.11 435.05 L694.02 435.70 L695.92 435.69 L697.83 434.33 L699.73 432.65 L701.64 432.40 L703.54 432.55 L705.45 432.42 L707.35 432.51 L709.26 432.34 L711.16 432.46 L713.07 432.26 L714.97 432.48 L716.88 432.46 L718.78 432.52 L720.69 432.39 L722.59 432.58 L724.50 432.36 L726.40 432.56 L728.31 432.37 L730.21 432.51 L732.12 432.47 L734.02 432.33 L735.93 432.35 L737.83 432.25 L739.74 432.44 L741.64 432.46 L743.55 432.25 L745.45 432.32 L747.36 432.27 L749.26 432.51 L751.17 432.49 L753.07 432.30 L754.98 432.47 L756.88 432.57 L758.79 432.41 L760.69 432.59 L762.60 432.38 L764.50 432.28 L766.41 432.40 L768.31 432.29 L770.22 432.55 L772.12 432.29 L774.03 432.56 L775.93 432.53 L777.84 432.48 L779.74 432.55 L781.65 433.22 L783.55 434.79 L785.46 435.70 L787.36 435.70 L789.27 434.66 L791.17 433.00 L793.08 432.56 L794.98 432.29 L796.89 432.55 L798.79 432.41 L799.00 432.47 L799.00 435.70Z" fill="#ee6a2e"/><path d="M457.80 435.70 L457.80 433.82 L459.70 433.75 L461.61 433.78 L463.51 433.79 L465.42 433.89 L467.32 433.74 L469.23 433.83 L471.13 433.77 L473.04 433.76 L474.94 433.74 L476.85 433.71 L478.75 433.88 L480.66 433.91 L482.56 433.90 L484.47 433.91 L486.37 433.88 L488.28 433.89 L490.18 433.71 L492.09 433.87 L493.99 433.80 L495.90 433.80 L497.80 433.75 L499.71 433.89 L501.61 433.91 L503.52 433.88 L505.42 433.77 L507.33 434.52 L509.23 435.39 L511.14 435.70 L513.04 435.65 L514.95 434.92 L516.85 433.92 L518.76 433.92 L520.66 433.77 L522.57 433.73 L524.47 433.80 L526.38 433.92 L528.28 433.85 L530.19 433.92 L532.09 433.88 L534.00 433.88 L535.90 433.90 L537.81 433.86 L539.71 433.72 L541.62 433.91 L543.52 433.72 L545.43 434.63 L547.33 435.41 L549.24 435.70 L551.14 435.61 L553.05 434.79 L554.95 433.91 L556.86 433.78 L558.76 433.83 L560.67 433.78 L562.57 433.75 L564.48 433.91 L566.38 433.81 L568.29 433.79 L570.19 433.77 L572.10 433.81 L574.00 433.86 L575.91 433.82 L577.81 433.90 L579.72 433.82 L581.62 433.82 L583.53 433.87 L585.43 433.81 L587.34 433.89 L589.24 433.89 L591.15 433.71 L593.05 433.82 L594.96 433.71 L596.86 433.84 L598.77 434.22 L600.67 435.10 L602.58 435.70 L604.48 435.70 L606.39 435.21 L608.29 434.31 L610.20 433.74 L612.10 433.86 L614.01 433.73 L615.91 433.92 L617.82 433.84 L619.72 433.73 L621.63 433.82 L623.53 433.93 L625.44 433.90 L627.34 433.92 L629.25 433.86 L631.15 433.94 L633.06 433.77 L634.96 433.94 L636.87 433.79 L638.77 433.75 L640.68 433.75 L642.58 433.76 L644.49 433.86 L646.39 433.79 L648.30 433.78 L650.20 433.79 L652.11 433.79 L654.01 433.89 L655.92 433.81 L657.82 433.79 L659.73 433.93 L661.63 433.82 L663.54 433.82 L665.44 433.81 L667.35 433.88 L669.25 433.73 L671.16 433.92 L673.06 433.88 L674.97 433.71 L676.87 433.83 L678.78 433.84 L680.68 433.84 L682.59 433.77 L684.49 433.79 L686.40 433.80 L688.30 433.71 L690.21 434.52 L692.11 435.35 L694.02 435.70 L695.92 435.70 L697.83 434.90 L699.73 434.04 L701.64 433.76 L703.54 433.73 L705.45 433.78 L707.35 433.78 L709.26 433.87 L711.16 433.91 L713.07 433.72 L714.97 433.85 L716.88 433.85 L718.78 433.81 L720.69 433.90 L722.59 433.82 L724.50 433.75 L726.40 433.92 L728.31 433.91 L730.21 433.76 L732.12 433.71 L734.02 433.77 L735.93 433.74 L737.83 433.79 L739.74 433.84 L741.64 433.90 L743.55 433.93 L745.45 433.90 L747.36 433.93 L749.26 433.77 L751.17 433.90 L753.07 433.83 L754.98 433.81 L756.88 433.72 L758.79 433.87 L760.69 433.83 L762.60 433.90 L764.50 433.82 L766.41 433.90 L768.31 433.75 L770.22 433.83 L772.12 433.87 L774.03 433.74 L775.93 433.74 L777.84 433.83 L779.74 433.85 L781.65 434.39 L783.55 435.19 L785.46 435.70 L787.36 435.70 L789.27 435.07 L791.17 434.23 L793.08 433.78 L794.98 433.80 L796.89 433.84 L798.79 433.79 L799.00 433.84 L799.00 435.70Z" fill="#f5b02c"/><rect x="457.8" y="435.55" width="341.2" height="0.8" fill="#9a9aa3"/><rect x="492.50" y="435.90" width="0.7" height="2" fill="#9a9aa3"/><rect x="538.22" y="435.90" width="0.7" height="2" fill="#9a9aa3"/><rect x="583.94" y="435.90" width="0.7" height="2" fill="#9a9aa3"/><rect x="629.66" y="435.90" width="0.7" height="2" fill="#9a9aa3"/><rect x="675.38" y="435.90" width="0.7" height="2" fill="#9a9aa3"/><rect x="721.10" y="435.90" width="0.7" height="2" fill="#9a9aa3"/><rect x="766.82" y="435.90" width="0.7" height="2" fill="#9a9aa3"/><rect x="452.2" y="453.2" width="6" height="6" rx="0.8" fill="#4dae8b"/><rect x="532" y="453.2" width="6" height="6" rx="0.8" fill="#2fc4c6"/><rect x="610.2" y="453.2" width="6" height="6" rx="0.8" fill="#2fc4c6"/><rect x="686.5" y="453.2" width="6" height="6" rx="0.8" fill="#d42a5b"/></svg>
<svg class="a" style="left:0;top:0" width="824" height="463" viewBox="0 0 824 463" fill="none" stroke-linecap="round" stroke-linejoin="round"><g transform="translate(0 0)" ><ellipse cx="7.3" cy="2.9" rx="1.6" ry="2.1" fill="#f1eff3"/><path d="M13.2 2.4 L15 0.2 L15.9 3.6Z" fill="#f1eff3"/><ellipse cx="11" cy="4.7" rx="3.7" ry="3.5" fill="#f4f2f6"/><path d="M12.6 4 L15.8 6.2 L14.4 7.8 L11.4 7.6Z" fill="#f1eff3"/><path d="M8.2 6.6 L12.4 7.6 L11.2 11.8 L10.4 15.2 L7.6 15.6 L6.2 13 L7 10Z" fill="#f1eff3"/><path d="M11.4 8.7 L19 7.8 L19.5 13.3 L12 14.3Z" fill="#d5d2d9"/><path d="M13.4 11.6 L16 10.6 L18 11 L18.2 12.5 L13.5 13.2Z" fill="#3c3540"/><circle cx="11.4" cy="4.6" r="0.55" fill="#3c3540"/><circle cx="14.6" cy="6.3" r="0.4" fill="#b0576e"/></g><g transform="translate(0 0)" ><circle cx="11.3" cy="86.3" r="2.7" stroke="#96939e" stroke-width="0.85"/><path d="M13.3 88.4 L15.4 90.6" stroke="#96939e" stroke-width="1"/></g><g transform="translate(0 0)" ><path d="M9.2 102 h1.8 l0.5 1.2 v6.6 a0.5 0.5 0 0 1 -0.5 0.5 h-2.6 a0.8 0.8 0 0 1 -0.8 -0.9 l0.9 -6.4 z M14.6 102 h-1.8 l-0.5 1.2 v6.6 a0.5 0.5 0 0 0 0.5 0.5 h2.6 a0.8 0.8 0 0 0 0.8 -0.9 l-0.9 -6.4 z" fill="#9a97a2"/><rect x="11.3" y="104" width="1.2" height="2.4" fill="#9a97a2"/></g><g transform="translate(0 0)" ><rect x="7.6" y="122.6" width="8.4" height="6.8" rx="1" fill="#77727f"/><rect x="8.3" y="124.2" width="7" height="0.7" fill="#2a242f"/></g><g transform="translate(0 0)" ><path d="M7.4 142 V148.6 H16" stroke="#827e8a" stroke-width="0.9"/><path d="M8.4 148 V145.6 L10 143.2 L11.4 145.6 L12.8 144 L15.4 146.4 V148 Z" fill="#827e8a"/></g><g transform="translate(0 0)" ><circle cx="9.5" cy="162.4" r="1.9" fill="#96929d"/><circle cx="14.4" cy="162.4" r="1.6" stroke="#96929d" stroke-width="0.8"/><circle cx="11.9" cy="166.7" r="1.9" fill="#96929d"/></g><g transform="translate(0 0)" ><path d="M15 180.6 A3.9 3.9 0 1 0 15.8 184" stroke="#908c97" stroke-width="0.95"/><path d="M13.6 182.2 A2 2 0 1 0 14 184.2" stroke="#908c97" stroke-width="0.9"/></g><g transform="translate(0 0)" ><path d="M8.6 206.4 A4.1 4.1 0 0 1 8.3 201.8" stroke="#908c97" stroke-width="1"/><path d="M9.6 200.5 A4.1 4.1 0 0 1 11 199.8" stroke="#908c97" stroke-width="1"/><path d="M14.6 200.6 A4.1 4.1 0 0 1 15.2 206.4" stroke="#908c97" stroke-width="1"/><path d="M11.6 204.6 L13.4 200.6" stroke="#908c97" stroke-width="1.1"/></g><g transform="translate(0 0)" ><path d="M8 221.6 h2.2 v-0.8 a1 1 0 1 1 1.6 0 v0.8 h2 v1.6 h0.9 a0.9 0.9 0 1 1 0 1.4 h-0.9 v1 h-5.8 z" fill="#a19ea8"/><rect x="9.4" y="222.6" width="1" height="2.6" fill="#262029"/></g><g transform="translate(0 0)" ><path d="M7.4 238.3 H16.4 M9 240.5 H16.4 M10.6 242.6 H14.2" stroke="#ffffff" stroke-width="1.05" stroke-linecap="butt"/><rect x="11.4" y="244.2" width="1.4" height="1.3" fill="#fff"/><rect x="7.4" y="240" width="0.9" height="0.9" fill="#fff"/></g><g transform="translate(0 0)" ><ellipse cx="10" cy="259" rx="2.3" ry="1.7" transform="rotate(38 10 259)" stroke="#96929d" stroke-width="0.9"/><ellipse cx="13.6" cy="262.6" rx="2.3" ry="1.7" transform="rotate(38 13.6 262.6)" stroke="#96929d" stroke-width="0.9"/></g><g transform="translate(0 0)" ><path d="M9.6 277.2 H15.8 L14.4 283 H8.2 Z" fill="#96929d"/><path d="M8.2 283.6 H14.2 L14.6 284.3 H8.4Z" fill="#8d8994"/></g><g transform="translate(0 0)" ><circle cx="13" cy="300" r="2.5" stroke="#96929d" stroke-width="0.9"/><path d="M11.2 301.9 L9.4 303.6" stroke="#96929d" stroke-width="1"/><path d="M8 295.6 H13.4 M8 297.4 H9.6 M8 299.3 H9.4 M8 301.2 H9" stroke="#96929d" stroke-width="0.8"/></g><g transform="translate(0 0)" ><path d="M11.7 315.2 L15 316.2 V319.4 C15 321.2 13.6 322.4 11.7 323 C9.8 322.4 8.4 321.2 8.4 319.4 V316.2 Z" stroke="#96929d" stroke-width="0.9"/><path d="M11.7 316.8 V321.4" stroke="#96929d" stroke-width="0.8"/></g><g transform="translate(0 0)" ><circle cx="11.8" cy="338.2" r="1.9" fill="#908c97"/><path d="M11.8 334 V342.4 M8 336 L15.6 340.4 M8 340.4 L15.6 336" stroke="#908c97" stroke-width="0.75"/></g><g transform="translate(0 0)" ><path d="M8 406.4 H15.6 V411.2 H11 L9.4 413 V411.2 H8 Z" stroke="#b9b6bf" stroke-width="0.9"/></g><g transform="translate(0 0)" ><circle cx="11.75" cy="428.7" r="3.8" fill="#a7a4ae"/><path d="M10.6 427.6 A1.25 1.25 0 1 1 11.9 428.9 V429.6" stroke="#1b151f" stroke-width="0.95"/><circle cx="11.9" cy="431" r="0.55" fill="#1b151f"/></g><g transform="translate(0 0)" ><circle cx="11.75" cy="447.6" r="5.3" fill="#d5476c"/><path d="M7.4 447.4 H16.1 V449.6 A4.3 2.6 0 0 1 7.4 449.6Z" fill="#c23a5c"/><rect x="9.6" y="443.8" width="4.2" height="3.2" rx="0.5" fill="#b8385a"/><rect x="10.6" y="444.6" width="2.2" height="1.5" fill="#dc5f80"/></g><g transform="translate(0 0)" ><path d="M34.4 5.5 H46.5 M38 8.5 H46.5 M39.6 11.5 H45" stroke="#3c3c46" stroke-width="1.3" stroke-linecap="butt"/><rect x="41.2" y="13.4" width="1.8" height="1.5" fill="#3c3c46"/><rect x="34.5" y="7.9" width="1.4" height="1.2" fill="#3c3c46"/></g><g transform="translate(0 0)" ><polygon points="39.30,28.60 40.77,31.18 43.67,31.78 41.68,33.97 42.00,36.92 39.30,35.70 36.60,36.92 36.92,33.97 34.93,31.78 37.83,31.18" fill="#f6922c" stroke="#f6922c" stroke-width="1.3"/></g><g transform="translate(0 0)" ><rect x="48.5" y="27" width="11.6" height="12" rx="2" fill="#3fae80"/><circle cx="54.3" cy="33" r="3.3" stroke="#e9fff4" stroke-width="0.8"/><path d="M51 33 H57.6 M54.3 29.7 V36.3 M52.8 30 C51.8 32 51.8 34 52.8 36 M55.8 30 C56.8 32 56.8 34 55.8 36" stroke="#e9fff4" stroke-width="0.6"/></g><g transform="translate(0 0)" ><path d="M198.2 33.6 H202.2 V35.6 A1.4 1.4 0 0 1 200.8 37 H199.6 A1.4 1.4 0 0 1 198.2 35.6 Z" fill="#b9bcc6"/><path d="M196.6 37.4 H203.6" stroke="#c9a98e" stroke-width="0.8"/><path d="M200.4 28.6 C199.2 30 201.4 30.8 200.2 32.6" stroke="#e2a77f" stroke-width="0.8"/></g><g transform="translate(0 0)" ><path d="M725.4 6.6 H730.4 M726.4 6.8 V9.6 M729.4 6.8 V9.6 M725 9.8 H730.8 M727.9 10 V13.4" stroke="#6e6e79" stroke-width="0.75"/></g><g transform="translate(0 0)" ><path d="M759 6.8 V12.8 L755.6 9.8Z M763 6.8 V12.8 L759.6 9.8Z" fill="#4a4a55"/></g><g transform="translate(0 0)" ><path d="M771.6 6.4 V13.2 L777 9.8Z" fill="#4a4a55"/></g><g transform="translate(0 0)" ><path d="M785 6.8 V12.8 L788.4 9.8Z M789 6.8 V12.8 L792.4 9.8Z" fill="#4a4a55"/></g><g transform="translate(0 0)" ><circle cx="807" cy="9.3" r="2.8" stroke="#4a4a55" stroke-width="0.8"/><path d="M805.6 9.3 H808.4" stroke="#4a4a55" stroke-width="0.8"/><path d="M809.1 11.4 L811 13.4" stroke="#4a4a55" stroke-width="0.9"/></g><g transform="translate(0 0)" ><circle cx="808.6" cy="33" r="5.6" fill="#e9e6e3"/><path d="M806.6 30.4 A2.2 2.6 0 0 1 811 30.4 V32.4 A2.2 2.4 0 0 1 806.6 32.4Z" fill="#8a5b4c"/><path d="M806.6 29.8 A2.3 2 0 0 1 811 29.8 V30.6 H806.6Z" fill="#3a2a28"/><path d="M804 38 C804.4 35 806.4 34.2 808.8 34.2 C811.2 34.2 813 35 813.4 38 Z" fill="#3b3a42"/></g><g transform="translate(0 0)" ><path d="M666.2 47 V53 H673.4" stroke="#4a4a55" stroke-width="0.8"/><path d="M667.2 52.4 V50 L668.6 48 L669.8 50 L671 48.8 L673 50.8 V52.4Z" fill="#4a4a55"/></g><g transform="translate(0 0)" ><circle cx="768" cy="50.2" r="1.9" stroke="#4a4a55" stroke-width="1.3"/><path d="M768 47.1 V53.3 M765.3 48.65 L770.7 51.75 M765.3 51.75 L770.7 48.65" stroke="#4a4a55" stroke-width="1"/><circle cx="768" cy="50.2" r="0.85" fill="#fff"/></g><g transform="translate(0 0)" ><path d="M42 90.7 L45 93.4 L42 96.1" stroke="#d8354f" stroke-width="0.75"/></g><g transform="translate(0 0)" ><path d="M56.6 90 h1.4 l0.4 0.9 v4.8 a0.4 0.4 0 0 1 -0.4 0.4 h-2 a0.6 0.6 0 0 1 -0.6 -0.7 l0.7 -4.6 z M60.8 90 h-1.4 l-0.4 0.9 v4.8 a0.4 0.4 0 0 0 0.4 0.4 h2 a0.6 0.6 0 0 0 0.6 -0.7 l-0.7 -4.6 z" fill="#fff"/><rect x="58.2" y="91.6" width="1" height="1.8" fill="#fff"/></g><g transform="translate(0 0)" ><path d="M41.8 119.9 L45.2 123.5 L48.6 119.9" stroke="#383842" stroke-width="1.0"/></g><g transform="translate(0 0)" ><circle cx="55.2" cy="148.6" r="0.9" stroke="#3a3a44" stroke-width="0.7"/><circle cx="55.2" cy="155.4" r="0.9" stroke="#3a3a44" stroke-width="0.7"/><circle cx="59" cy="150" r="0.9" stroke="#3a3a44" stroke-width="0.7"/><path d="M55.2 149.6 V154.4 M55.2 153.4 C55.2 152 59 152.4 59 151" stroke="#3a3a44" stroke-width="0.7"/></g><g transform="translate(0 0)" ><ellipse cx="209" cy="152.4" rx="1.7" ry="2.3" stroke="#3a3a44" stroke-width="0.75"/><path d="M207.6 149.6 A1.5 1.5 0 0 1 210.4 149.6 M205.2 152.4 H207.2 M210.8 152.4 H212.8 M205.6 149.6 L207.4 151 M212.4 149.6 L210.6 151 M205.6 155.4 L207.4 154 M212.4 155.4 L210.6 154" stroke="#3a3a44" stroke-width="0.7"/></g><g transform="translate(0 0)" ><circle cx="361.8" cy="152" r="3.6" fill="#fbdfe2" stroke="#d9424f" stroke-width="0.9"/><circle cx="361.6" cy="152" r="1.8" stroke="#d9424f" stroke-width="0.8"/><path d="M361.6 152 L365.4 148.6" stroke="#fff" stroke-width="1.4"/><path d="M361.8 151.8 L365.2 149" stroke="#d9424f" stroke-width="0.7"/></g><g transform="translate(0 0)" ><path d="M512.6 148.4 C509.6 150.4 515 151.6 512 153.6 C510.4 154.8 512 155.8 513 156 M515.4 150 L513 152 L515.4 154.2 M517.6 150 A3 3 0 0 1 517.6 154.2" stroke="#d9424f" stroke-width="1.0"/><circle cx="513.6" cy="152.1" r="0.8" fill="#d9424f"/></g><g transform="translate(0 0)" ><circle cx="666.9" cy="152.1" r="3.5" fill="#fdeaec" stroke="#d9424f" stroke-width="0.85"/><path d="M665.1 151.6 H668.7 V152.8 A1.8 1.5 0 0 1 665.1 152.8Z" fill="#d9424f"/><path d="M665.7 151.2 A1.2 1.3 0 0 1 668.1 151.2" stroke="#d9424f" stroke-width="0.6"/></g><g transform="translate(0 0)" ><path d="M447.2 152 H452.8 M450 149.2 V154.8 M597.2 152 H602.8 M600 149.2 V154.8" stroke="#5c5c66" stroke-width="0.7"/></g><g transform="translate(0 0)" ><path d="M320.6 164.6 L325.4 169.4 M325.6 166 V169.6 H322" stroke="#2f9e62" stroke-width="0.9"/></g><g transform="translate(0 0)" ><path d="M374.8 192.0 C371.6 193.79999999999998 377.40000000000003 195.2 374.20000000000005 197.6 C372.6 199.0 374.20000000000005 200.0 375.6 200.39999999999998 M378.20000000000005 194.39999999999998 L376.20000000000005 196.2 L378.20000000000005 198.2 M380.0 194.0 A3 3 0 0 1 380.0 198.39999999999998" stroke="#4c4c56" stroke-width="1.0"/><path d="M387.6 196.79999999999998 V199.89999999999998 H395.20000000000005 V196.79999999999998 M391.40000000000003 197.79999999999998 V192.6 M389.40000000000003 194.6 L391.40000000000003 192.39999999999998 L393.40000000000003 194.6" stroke="#585862" stroke-width="0.85"/><path d="M403.00 194.70 V192.50 H405.20" stroke="#585862" stroke-width="0.8"/><path d="M403.60 193.10 L405.40 194.90" stroke="#585862" stroke-width="0.7"/><path d="M410.40 194.70 V192.50 H408.20" stroke="#585862" stroke-width="0.8"/><path d="M409.80 193.10 L408.00 194.90" stroke="#585862" stroke-width="0.7"/><path d="M403.00 197.70 V199.90 H405.20" stroke="#585862" stroke-width="0.8"/><path d="M403.60 199.30 L405.40 197.50" stroke="#585862" stroke-width="0.7"/><path d="M410.40 197.70 V199.90 H408.20" stroke="#585862" stroke-width="0.8"/><path d="M409.80 199.30 L408.00 197.50" stroke="#585862" stroke-width="0.7"/></g><g transform="translate(0 0)" ><path d="M760.2 192.0 C757 193.79999999999998 762.8 195.2 759.6 197.6 C758 199.0 759.6 200.0 761 200.39999999999998 M763.6 194.39999999999998 L761.6 196.2 L763.6 198.2 M765.4 194.0 A3 3 0 0 1 765.4 198.39999999999998" stroke="#4c4c56" stroke-width="1.0"/><path d="M773 196.79999999999998 V199.89999999999998 H780.6 V196.79999999999998 M776.8 197.79999999999998 V192.6 M774.8 194.6 L776.8 192.39999999999998 L778.8 194.6" stroke="#585862" stroke-width="0.85"/><path d="M788.40 194.70 V192.50 H790.60" stroke="#585862" stroke-width="0.8"/><path d="M789.00 193.10 L790.80 194.90" stroke="#585862" stroke-width="0.7"/><path d="M795.80 194.70 V192.50 H793.60" stroke="#585862" stroke-width="0.8"/><path d="M795.20 193.10 L793.40 194.90" stroke="#585862" stroke-width="0.7"/><path d="M788.40 197.70 V199.90 H790.60" stroke="#585862" stroke-width="0.8"/><path d="M789.00 199.30 L790.80 197.50" stroke="#585862" stroke-width="0.7"/><path d="M795.80 197.70 V199.90 H793.60" stroke="#585862" stroke-width="0.8"/><path d="M795.20 199.30 L793.40 197.50" stroke="#585862" stroke-width="0.7"/></g><g transform="translate(0 0)" ><path d="M374.8 337.40000000000003 C371.6 339.20000000000005 377.40000000000003 340.6 374.20000000000005 343.0 C372.6 344.40000000000003 374.20000000000005 345.40000000000003 375.6 345.8 M378.20000000000005 339.8 L376.20000000000005 341.6 L378.20000000000005 343.6 M380.0 339.40000000000003 A3 3 0 0 1 380.0 343.8" stroke="#4c4c56" stroke-width="1.0"/><path d="M387.6 342.20000000000005 V345.3 H395.20000000000005 V342.20000000000005 M391.40000000000003 343.20000000000005 V338.0 M389.40000000000003 340.0 L391.40000000000003 337.8 L393.40000000000003 340.0" stroke="#585862" stroke-width="0.85"/><path d="M403.00 340.10 V337.90 H405.20" stroke="#585862" stroke-width="0.8"/><path d="M403.60 338.50 L405.40 340.30" stroke="#585862" stroke-width="0.7"/><path d="M410.40 340.10 V337.90 H408.20" stroke="#585862" stroke-width="0.8"/><path d="M409.80 338.50 L408.00 340.30" stroke="#585862" stroke-width="0.7"/><path d="M403.00 343.10 V345.30 H405.20" stroke="#585862" stroke-width="0.8"/><path d="M403.60 344.70 L405.40 342.90" stroke="#585862" stroke-width="0.7"/><path d="M410.40 343.10 V345.30 H408.20" stroke="#585862" stroke-width="0.8"/><path d="M409.80 344.70 L408.00 342.90" stroke="#585862" stroke-width="0.7"/></g><g transform="translate(0 0)" ><path d="M760.2 337.40000000000003 C757 339.20000000000005 762.8 340.6 759.6 343.0 C758 344.40000000000003 759.6 345.40000000000003 761 345.8 M763.6 339.8 L761.6 341.6 L763.6 343.6 M765.4 339.40000000000003 A3 3 0 0 1 765.4 343.8" stroke="#4c4c56" stroke-width="1.0"/><path d="M773 342.20000000000005 V345.3 H780.6 V342.20000000000005 M776.8 343.20000000000005 V338.0 M774.8 340.0 L776.8 337.8 L778.8 340.0" stroke="#585862" stroke-width="0.85"/><path d="M788.40 340.10 V337.90 H790.60" stroke="#585862" stroke-width="0.8"/><path d="M789.00 338.50 L790.80 340.30" stroke="#585862" stroke-width="0.7"/><path d="M795.80 340.10 V337.90 H793.60" stroke="#585862" stroke-width="0.8"/><path d="M795.20 338.50 L793.40 340.30" stroke="#585862" stroke-width="0.7"/><path d="M788.40 343.10 V345.30 H790.60" stroke="#585862" stroke-width="0.8"/><path d="M789.00 344.70 L790.80 342.90" stroke="#585862" stroke-width="0.7"/><path d="M795.80 343.10 V345.30 H793.60" stroke="#585862" stroke-width="0.8"/><path d="M795.20 344.70 L793.40 342.90" stroke="#585862" stroke-width="0.7"/></g><g transform="translate(0 0)" ><path d="M284.2 185.4 V194.2 L286.3 192.3 L287.7 195.6 L289.3 194.9 L287.9 191.7 L290.7 191.5 Z" fill="#111" stroke="#fff" stroke-width="0.6"/></g></svg>
<svg class="a" style="left:0;top:0;z-index:5" width="824" height="463" viewBox="0 0 824 463"><rect x="25.8" y="460.6" width="799" height="1" fill="#bdbdc2"/><rect x="25.8" y="461.6" width="799" height="2" fill="#ececee"/></svg>
<span class="t" style="left:54.60px;top:5px;font-size:8.6px;line-height:10.32px;font-weight:400;color:#26262e;letter-spacing:0.000px;transform:scaleX(0.9342);">APM</span>
<span class="t" style="left:93.50px;top:5px;font-size:8.6px;line-height:10.32px;font-weight:400;color:#1d1d26;letter-spacing:0.000px;transform:scaleX(0.9256);">Services</span>
<span class="t" style="left:152.00px;top:5px;font-size:8.6px;line-height:10.32px;font-weight:400;color:#50505a;letter-spacing:0.000px;transform:scaleX(0.9247);">Traces</span>
<span class="t" style="left:204.00px;top:5px;font-size:8.6px;line-height:10.32px;font-weight:400;color:#50505a;letter-spacing:0.000px;transform:scaleX(0.9771);">Profiles</span>
<span class="t" style="left:260.00px;top:5px;font-size:8.6px;line-height:10.32px;font-weight:400;color:#50505a;letter-spacing:0.191px;">Instrumentation</span>
<span class="t" style="left:555.00px;top:7px;font-size:7.3px;line-height:8.76px;font-weight:400;color:#5b6470;letter-spacing:0.183px;">2d</span>
<span class="t" style="left:575.00px;top:7px;font-size:7.4px;line-height:8.88px;font-weight:400;color:#24242c;letter-spacing:0.000px;transform:scaleX(0.9753);">Mar 17, 1:24 am – Mar 18, 10:09 pm</span>
<span class="t b" style="left:69.60px;top:28px;font-size:10px;line-height:12.0px;font-weight:700;color:#24242c;letter-spacing:0.000px;">product-recommendation</span>
<span class="t" style="left:707.30px;top:30px;font-size:7.3px;line-height:8.76px;font-weight:400;color:#3a3a44;letter-spacing:0.000px;transform:scaleX(0.9220);">TEAM</span>
<span class="t" style="left:735.10px;top:29px;font-size:7.6px;line-height:9.12px;font-weight:400;color:#26262e;letter-spacing:0.000px;transform:scaleX(0.9549);">Shopist</span>
<span class="t" style="left:768.80px;top:30px;font-size:7.3px;line-height:8.76px;font-weight:400;color:#3a3a44;letter-spacing:0.000px;transform:scaleX(0.9221);">ON CALL</span>
<span class="t" style="left:39.10px;top:46px;font-size:7.6px;line-height:9.12px;font-weight:400;color:#26262e;letter-spacing:0.000px;transform:scaleX(0.9099);">env:prod</span>
<span class="t" style="left:92.50px;top:46px;font-size:7.6px;line-height:9.12px;font-weight:400;color:#26262e;letter-spacing:0.000px;transform:scaleX(0.9190);">cluster-name:*</span>
<span class="t" style="left:164.50px;top:46px;font-size:7.6px;line-height:9.12px;font-weight:400;color:#26262e;letter-spacing:0.000px;transform:scaleX(0.8934);">servlet.request</span>
<span class="t" style="left:236.00px;top:46px;font-size:7.6px;line-height:9.12px;font-weight:400;color:#26262e;letter-spacing:0.000px;transform:scaleX(0.9476);">version:*</span>
<span class="t" style="left:678.75px;top:46px;font-size:7.6px;line-height:9.12px;font-weight:400;color:#26262e;letter-spacing:0.000px;transform:scaleX(0.8811);">Related Dashboards</span>
<span class="t" style="left:775.30px;top:46px;font-size:7.6px;line-height:9.12px;font-weight:400;color:#26262e;letter-spacing:0.000px;transform:scaleX(0.8751);">Service Info</span>
<span class="t b" style="left:230.00px;top:64px;font-size:7px;line-height:8.4px;font-weight:700;color:#ffffff;letter-spacing:0.000px;transform:scaleX(0.9802);">ALERT: 6 Monitors</span>
<span class="t b" style="left:634.50px;top:64px;font-size:7px;line-height:8.4px;font-weight:700;color:#f4fff6;letter-spacing:0.024px;">OK: 4 Monitors</span>
<span class="t b" style="left:66.00px;top:89px;font-size:6.2px;line-height:7.44px;font-weight:700;color:#ffffff;letter-spacing:0.000px;transform:scaleX(0.7200);">1</span>
<span class="t b" style="left:78.10px;top:90px;font-size:7.3px;line-height:8.76px;font-weight:700;color:#1e1e26;letter-spacing:0.000px;transform:scaleX(0.9015);">Watchdog Insights</span>
<span class="t" style="left:141.00px;top:90px;font-size:7.4px;line-height:8.88px;font-weight:400;color:#2c2c35;letter-spacing:0.000px;transform:scaleX(0.9079);">Latency outliers</span>
<span class="t" style="left:198.00px;top:90px;font-size:7.4px;line-height:8.88px;font-weight:400;color:#1c6fd1;letter-spacing:0.000px;transform:scaleX(0.9273);">View all</span>
<span class="t" style="left:53.40px;top:115px;font-size:10.5px;line-height:12.6px;font-weight:400;color:#1e1e26;letter-spacing:0.000px;transform:scaleX(0.9220);">Service Summary</span>
<span class="t b" style="left:63.00px;top:149px;font-size:7.3px;line-height:8.76px;font-weight:700;color:#1e1e26;letter-spacing:0.000px;transform:scaleX(0.9001);">DEPLOYMENTS</span>
<span class="t" style="left:52.50px;top:163px;font-size:7.6px;line-height:9.12px;font-weight:400;color:#1e1e26;letter-spacing:0.000px;transform:scaleX(0.9732);">No recent deployments</span>
<span class="t b" style="left:215.60px;top:149px;font-size:7.3px;line-height:8.76px;font-weight:700;color:#1e1e26;letter-spacing:0.000px;transform:scaleX(0.8970);">ERROR TRACKING</span>
<span class="t b" style="left:208.00px;top:164px;font-size:5.6px;line-height:6.72px;font-weight:700;color:#d8404d;letter-spacing:0.000px;transform:scaleX(0.9826);">8 ISSUES</span>
<span class="t" style="left:237.90px;top:163px;font-size:7.5px;line-height:9.0px;font-weight:400;color:#1e1e26;letter-spacing:0.000px;transform:scaleX(0.9431);">Error Rate:</span>
<span class="t b" style="left:274.75px;top:163px;font-size:7.5px;line-height:9.0px;font-weight:700;color:#1e1e26;letter-spacing:0.000px;transform:scaleX(0.8928);">1.53%</span>
<span class="t b" style="left:299.50px;top:164px;font-size:5.4px;line-height:6.48px;font-weight:700;color:#2f9e62;letter-spacing:0.000px;transform:scaleX(0.9653);">-0.05%</span>
<span class="t b" style="left:368.50px;top:149px;font-size:7.3px;line-height:8.76px;font-weight:700;color:#1e1e26;letter-spacing:0.000px;transform:scaleX(0.8525);">SLOs</span>
<span class="t" style="left:455.00px;top:149px;font-size:6.4px;line-height:7.68px;font-weight:400;color:#66666f;letter-spacing:0.033px;">Create new</span>
<span class="t b" style="left:361.00px;top:164px;font-size:6.4px;line-height:7.68px;font-weight:700;color:#ffffff;letter-spacing:0.000px;transform:scaleX(0.8545);">2 BREACHED</span>
<span class="t b" style="left:406.60px;top:164px;font-size:6.4px;line-height:7.68px;font-weight:700;color:#2f9e62;letter-spacing:0.000px;transform:scaleX(0.8578);">1 OK</span>
<span class="t b" style="left:520.50px;top:149px;font-size:7.3px;line-height:8.76px;font-weight:700;color:#1e1e26;letter-spacing:0.000px;transform:scaleX(0.9535);">INCIDENTS</span>
<span class="t" style="left:605.00px;top:149px;font-size:6.4px;line-height:7.68px;font-weight:400;color:#66666f;letter-spacing:0.045px;">Declare new</span>
<span class="t b" style="left:513.50px;top:164px;font-size:6.4px;line-height:7.68px;font-weight:700;color:#ffffff;letter-spacing:0.000px;transform:scaleX(0.8587);">8 ACTIVE</span>
<span class="t b" style="left:673.50px;top:149px;font-size:7.3px;line-height:8.76px;font-weight:700;color:#1e1e26;letter-spacing:0.000px;transform:scaleX(0.8806);">SECURITY</span>
<span class="t b" style="left:666.50px;top:164px;font-size:6.4px;line-height:7.68px;font-weight:700;color:#f6e6e9;letter-spacing:0.000px;transform:scaleX(0.9185);">7 SIGNALS</span>
<span class="t b" style="left:709.00px;top:164px;font-size:6.4px;line-height:7.68px;font-weight:700;color:#701f2f;letter-spacing:0.000px;transform:scaleX(0.9082);">23 VULNERABILITIES</span>
<span class="t" style="left:54.50px;top:192px;font-size:7.8px;line-height:9.36px;font-weight:400;color:#1e1e26;letter-spacing:0.000px;transform:scaleX(0.9159);">Requests by Version</span>
<span class="t" style="left:440.00px;top:192px;font-size:7.8px;line-height:9.36px;font-weight:400;color:#1e1e26;letter-spacing:0.000px;transform:scaleX(0.9258);">Latency by Version</span>
<span class="t" style="left:521.00px;top:192px;font-size:7.8px;line-height:9.36px;font-weight:400;color:#1e1e26;letter-spacing:0.000px;transform:scaleX(0.9880);">for</span>
<span class="t" style="left:537.50px;top:192px;font-size:7.8px;line-height:9.36px;font-weight:400;color:#1e1e26;letter-spacing:0.000px;transform:scaleX(0.9604);">p75</span>
<span class="t" style="left:716.00px;top:192px;font-size:7.8px;line-height:9.36px;font-weight:400;color:#1e1e26;letter-spacing:0.000px;transform:scaleX(0.8985);">Log scale</span>
<span class="t" style="left:54.50px;top:337px;font-size:7.8px;line-height:9.36px;font-weight:400;color:#1e1e26;letter-spacing:0.000px;transform:scaleX(0.9279);">Errors by Version</span>
<span class="t" style="left:440.00px;top:337px;font-size:7.8px;line-height:9.36px;font-weight:400;color:#1e1e26;letter-spacing:0.000px;transform:scaleX(0.9263);">% of Time Spent</span>
<span class="t" style="left:513.00px;top:337px;font-size:7.8px;line-height:9.36px;font-weight:400;color:#1e1e26;letter-spacing:0.000px;transform:scaleX(0.8485);">by</span>
<span class="t" style="left:527.00px;top:337px;font-size:7.8px;line-height:9.36px;font-weight:400;color:#1e1e26;letter-spacing:0.000px;transform:scaleX(0.9314);">Downstream Service</span>
<span class="t" style="left:60.80px;top:210px;font-size:6.3px;line-height:7.56px;font-weight:400;color:#2c2c36;letter-spacing:0.000px;transform:scaleX(0.9058);">80k</span>
<span class="t" style="left:60.80px;top:229px;font-size:6.3px;line-height:7.56px;font-weight:400;color:#2c2c36;letter-spacing:0.000px;transform:scaleX(0.9058);">60k</span>
<span class="t" style="left:60.80px;top:248px;font-size:6.3px;line-height:7.56px;font-weight:400;color:#2c2c36;letter-spacing:0.000px;transform:scaleX(0.9058);">40k</span>
<span class="t" style="left:60.80px;top:268px;font-size:6.3px;line-height:7.56px;font-weight:400;color:#2c2c36;letter-spacing:0.000px;transform:scaleX(0.9058);">20k</span>
<span class="t" style="left:63.40px;top:286px;font-size:6.3px;line-height:7.56px;font-weight:400;color:#2c2c36;letter-spacing:0.000px;transform:scaleX(0.9915);">0k</span>
<span class="t" style="left:449.40px;top:223px;font-size:6.3px;line-height:7.56px;font-weight:400;color:#2c2c36;letter-spacing:0.000px;transform:scaleX(0.9408);">20</span>
<span class="t" style="left:449.40px;top:239px;font-size:6.3px;line-height:7.56px;font-weight:400;color:#2c2c36;letter-spacing:0.000px;transform:scaleX(0.9408);">15</span>
<span class="t" style="left:449.40px;top:255px;font-size:6.3px;line-height:7.56px;font-weight:400;color:#2c2c36;letter-spacing:0.000px;transform:scaleX(0.9408);">10</span>
<span class="t" style="left:452.70px;top:270px;font-size:6.3px;line-height:7.56px;font-weight:400;color:#2c2c36;letter-spacing:0.000px;transform:scaleX(0.9387);">5</span>
<span class="t" style="left:452.70px;top:286px;font-size:6.3px;line-height:7.56px;font-weight:400;color:#2c2c36;letter-spacing:0.000px;transform:scaleX(0.9387);">0</span>
<span class="t" style="left:63.40px;top:373px;font-size:6.3px;line-height:7.56px;font-weight:400;color:#2c2c36;letter-spacing:0.000px;transform:scaleX(0.9915);">1k</span>
<span class="t" style="left:57.60px;top:402px;font-size:6.3px;line-height:7.56px;font-weight:400;color:#2c2c36;letter-spacing:0.141px;">0.5k</span>
<span class="t" style="left:63.40px;top:432px;font-size:6.3px;line-height:7.56px;font-weight:400;color:#2c2c36;letter-spacing:0.000px;transform:scaleX(0.9915);">0k</span>
<span class="t" style="left:446.80px;top:373px;font-size:6.3px;line-height:7.56px;font-weight:400;color:#2c2c36;letter-spacing:0.000px;transform:scaleX(0.8749);">100</span>
<span class="t" style="left:449.40px;top:403px;font-size:6.3px;line-height:7.56px;font-weight:400;color:#2c2c36;letter-spacing:0.000px;transform:scaleX(0.9408);">50</span>
<span class="t" style="left:452.70px;top:432px;font-size:6.3px;line-height:7.56px;font-weight:400;color:#2c2c36;letter-spacing:0.000px;transform:scaleX(0.9387);">0</span>
<span class="t" style="left:101.15px;top:293px;font-size:6.3px;line-height:7.56px;font-weight:400;color:#2c2c36;letter-spacing:0.000px;transform:scaleX(0.8626);">06:00</span>
<span class="t" style="left:146.87px;top:293px;font-size:6.3px;line-height:7.56px;font-weight:400;color:#2c2c36;letter-spacing:0.000px;transform:scaleX(0.8626);">12:00</span>
<span class="t" style="left:192.59px;top:293px;font-size:6.3px;line-height:7.56px;font-weight:400;color:#2c2c36;letter-spacing:0.000px;transform:scaleX(0.8626);">18:00</span>
<span class="t" style="left:238.01px;top:293px;font-size:6.3px;line-height:7.56px;font-weight:400;color:#2c2c36;letter-spacing:0.000px;transform:scaleX(0.7794);">Sat 18</span>
<span class="t" style="left:284.03px;top:293px;font-size:6.3px;line-height:7.56px;font-weight:400;color:#2c2c36;letter-spacing:0.000px;transform:scaleX(0.8626);">06:00</span>
<span class="t" style="left:329.75px;top:293px;font-size:6.3px;line-height:7.56px;font-weight:400;color:#2c2c36;letter-spacing:0.000px;transform:scaleX(0.8626);">12:00</span>
<span class="t" style="left:375.47px;top:293px;font-size:6.3px;line-height:7.56px;font-weight:400;color:#2c2c36;letter-spacing:0.000px;transform:scaleX(0.8626);">18:00</span>
<span class="t" style="left:486.05px;top:293px;font-size:6.3px;line-height:7.56px;font-weight:400;color:#2c2c36;letter-spacing:0.000px;transform:scaleX(0.8626);">06:00</span>
<span class="t" style="left:531.77px;top:293px;font-size:6.3px;line-height:7.56px;font-weight:400;color:#2c2c36;letter-spacing:0.000px;transform:scaleX(0.8626);">12:00</span>
<span class="t" style="left:577.49px;top:293px;font-size:6.3px;line-height:7.56px;font-weight:400;color:#2c2c36;letter-spacing:0.000px;transform:scaleX(0.8626);">18:00</span>
<span class="t" style="left:622.91px;top:293px;font-size:6.3px;line-height:7.56px;font-weight:400;color:#2c2c36;letter-spacing:0.000px;transform:scaleX(0.7794);">Sat 18</span>
<span class="t" style="left:668.93px;top:293px;font-size:6.3px;line-height:7.56px;font-weight:400;color:#2c2c36;letter-spacing:0.000px;transform:scaleX(0.8626);">06:00</span>
<span class="t" style="left:714.65px;top:293px;font-size:6.3px;line-height:7.56px;font-weight:400;color:#2c2c36;letter-spacing:0.000px;transform:scaleX(0.8626);">12:00</span>
<span class="t" style="left:760.37px;top:293px;font-size:6.3px;line-height:7.56px;font-weight:400;color:#2c2c36;letter-spacing:0.000px;transform:scaleX(0.8626);">18:00</span>
<span class="t" style="left:101.15px;top:439px;font-size:6.3px;line-height:7.56px;font-weight:400;color:#2c2c36;letter-spacing:0.000px;transform:scaleX(0.8626);">06:00</span>
<span class="t" style="left:146.87px;top:439px;font-size:6.3px;line-height:7.56px;font-weight:400;color:#2c2c36;letter-spacing:0.000px;transform:scaleX(0.8626);">12:00</span>
<span class="t" style="left:192.59px;top:439px;font-size:6.3px;line-height:7.56px;font-weight:400;color:#2c2c36;letter-spacing:0.000px;transform:scaleX(0.8626);">18:00</span>
<span class="t" style="left:238.01px;top:439px;font-size:6.3px;line-height:7.56px;font-weight:400;color:#2c2c36;letter-spacing:0.000px;transform:scaleX(0.7794);">Sat 18</span>
<span class="t" style="left:284.03px;top:439px;font-size:6.3px;line-height:7.56px;font-weight:400;color:#2c2c36;letter-spacing:0.000px;transform:scaleX(0.8626);">06:00</span>
<span class="t" style="left:329.75px;top:439px;font-size:6.3px;line-height:7.56px;font-weight:400;color:#2c2c36;letter-spacing:0.000px;transform:scaleX(0.8626);">12:00</span>
<span class="t" style="left:375.47px;top:439px;font-size:6.3px;line-height:7.56px;font-weight:400;color:#2c2c36;letter-spacing:0.000px;transform:scaleX(0.8626);">18:00</span>
<span class="t" style="left:486.05px;top:439px;font-size:6.3px;line-height:7.56px;font-weight:400;color:#2c2c36;letter-spacing:0.000px;transform:scaleX(0.8626);">06:00</span>
<span class="t" style="left:531.77px;top:439px;font-size:6.3px;line-height:7.56px;font-weight:400;color:#2c2c36;letter-spacing:0.000px;transform:scaleX(0.8626);">12:00</span>
<span class="t" style="left:577.49px;top:439px;font-size:6.3px;line-height:7.56px;font-weight:400;color:#2c2c36;letter-spacing:0.000px;transform:scaleX(0.8626);">18:00</span>
<span class="t" style="left:622.91px;top:439px;font-size:6.3px;line-height:7.56px;font-weight:400;color:#2c2c36;letter-spacing:0.000px;transform:scaleX(0.7794);">Sat 18</span>
<span class="t" style="left:668.93px;top:439px;font-size:6.3px;line-height:7.56px;font-weight:400;color:#2c2c36;letter-spacing:0.000px;transform:scaleX(0.8626);">06:00</span>
<span class="t" style="left:714.65px;top:439px;font-size:6.3px;line-height:7.56px;font-weight:400;color:#2c2c36;letter-spacing:0.000px;transform:scaleX(0.8626);">12:00</span>
<span class="t" style="left:760.37px;top:439px;font-size:6.3px;line-height:7.56px;font-weight:400;color:#2c2c36;letter-spacing:0.000px;transform:scaleX(0.8626);">18:00</span>
<span class="t" style="left:75.50px;top:308px;font-size:6.8px;line-height:8.16px;font-weight:400;color:#2c2c36;letter-spacing:0.000px;transform:scaleX(0.8759);">0fccc22c</span>
<span class="t" style="left:117.00px;top:308px;font-size:6.8px;line-height:8.16px;font-weight:400;color:#2c2c36;letter-spacing:0.000px;transform:scaleX(0.8760);">518e3555</span>
<span class="t" style="left:461.00px;top:308px;font-size:6.8px;line-height:8.16px;font-weight:400;color:#2c2c36;letter-spacing:0.000px;transform:scaleX(0.8759);">0fccc22c</span>
<span class="t" style="left:502.00px;top:308px;font-size:6.8px;line-height:8.16px;font-weight:400;color:#2c2c36;letter-spacing:0.000px;transform:scaleX(0.8926);">518e3555</span>
<span class="t" style="left:75.50px;top:453px;font-size:6.8px;line-height:8.16px;font-weight:400;color:#2c2c36;letter-spacing:0.000px;transform:scaleX(0.8759);">0fccc22c</span>
<span class="t" style="left:117.00px;top:453px;font-size:6.8px;line-height:8.16px;font-weight:400;color:#2c2c36;letter-spacing:0.000px;transform:scaleX(0.8760);">518e3555</span>
<span class="t" style="left:461.00px;top:453px;font-size:6.8px;line-height:8.16px;font-weight:400;color:#2c2c36;letter-spacing:0.000px;transform:scaleX(0.9327);">product-recommen...</span>
<span class="t" style="left:541.00px;top:453px;font-size:6.8px;line-height:8.16px;font-weight:400;color:#2c2c36;letter-spacing:0.000px;transform:scaleX(0.9510);">concurrent-correlator</span>
<span class="t" style="left:619.50px;top:453px;font-size:6.8px;line-height:8.16px;font-weight:400;color:#2c2c36;letter-spacing:0.000px;transform:scaleX(0.9245);">auth-dotnet-postgres</span>
<span class="t" style="left:696.00px;top:453px;font-size:6.8px;line-height:8.16px;font-weight:400;color:#2c2c36;letter-spacing:0.000px;transform:scaleX(0.9200);">number-facts</span>
<span class="t" style="left:776.60px;top:454px;font-size:5.6px;line-height:6.72px;font-weight:400;color:#2c2c36;letter-spacing:0.500px;transform:scaleX(1.0351);">+4</span>
<span class="r" style="left:53px;top:257px;letter-spacing:0.246px">Hits</span>
<span class="r" style="left:439px;top:257px;letter-spacing:0.034px">Seconds</span>
<span class="r" style="left:53px;top:402.5px;letter-spacing:0.230px">Errors</span>
<span class="r" style="left:439px;top:402.5px;letter-spacing:0.188px">Percent</span>
</div>
</body>
</html>
